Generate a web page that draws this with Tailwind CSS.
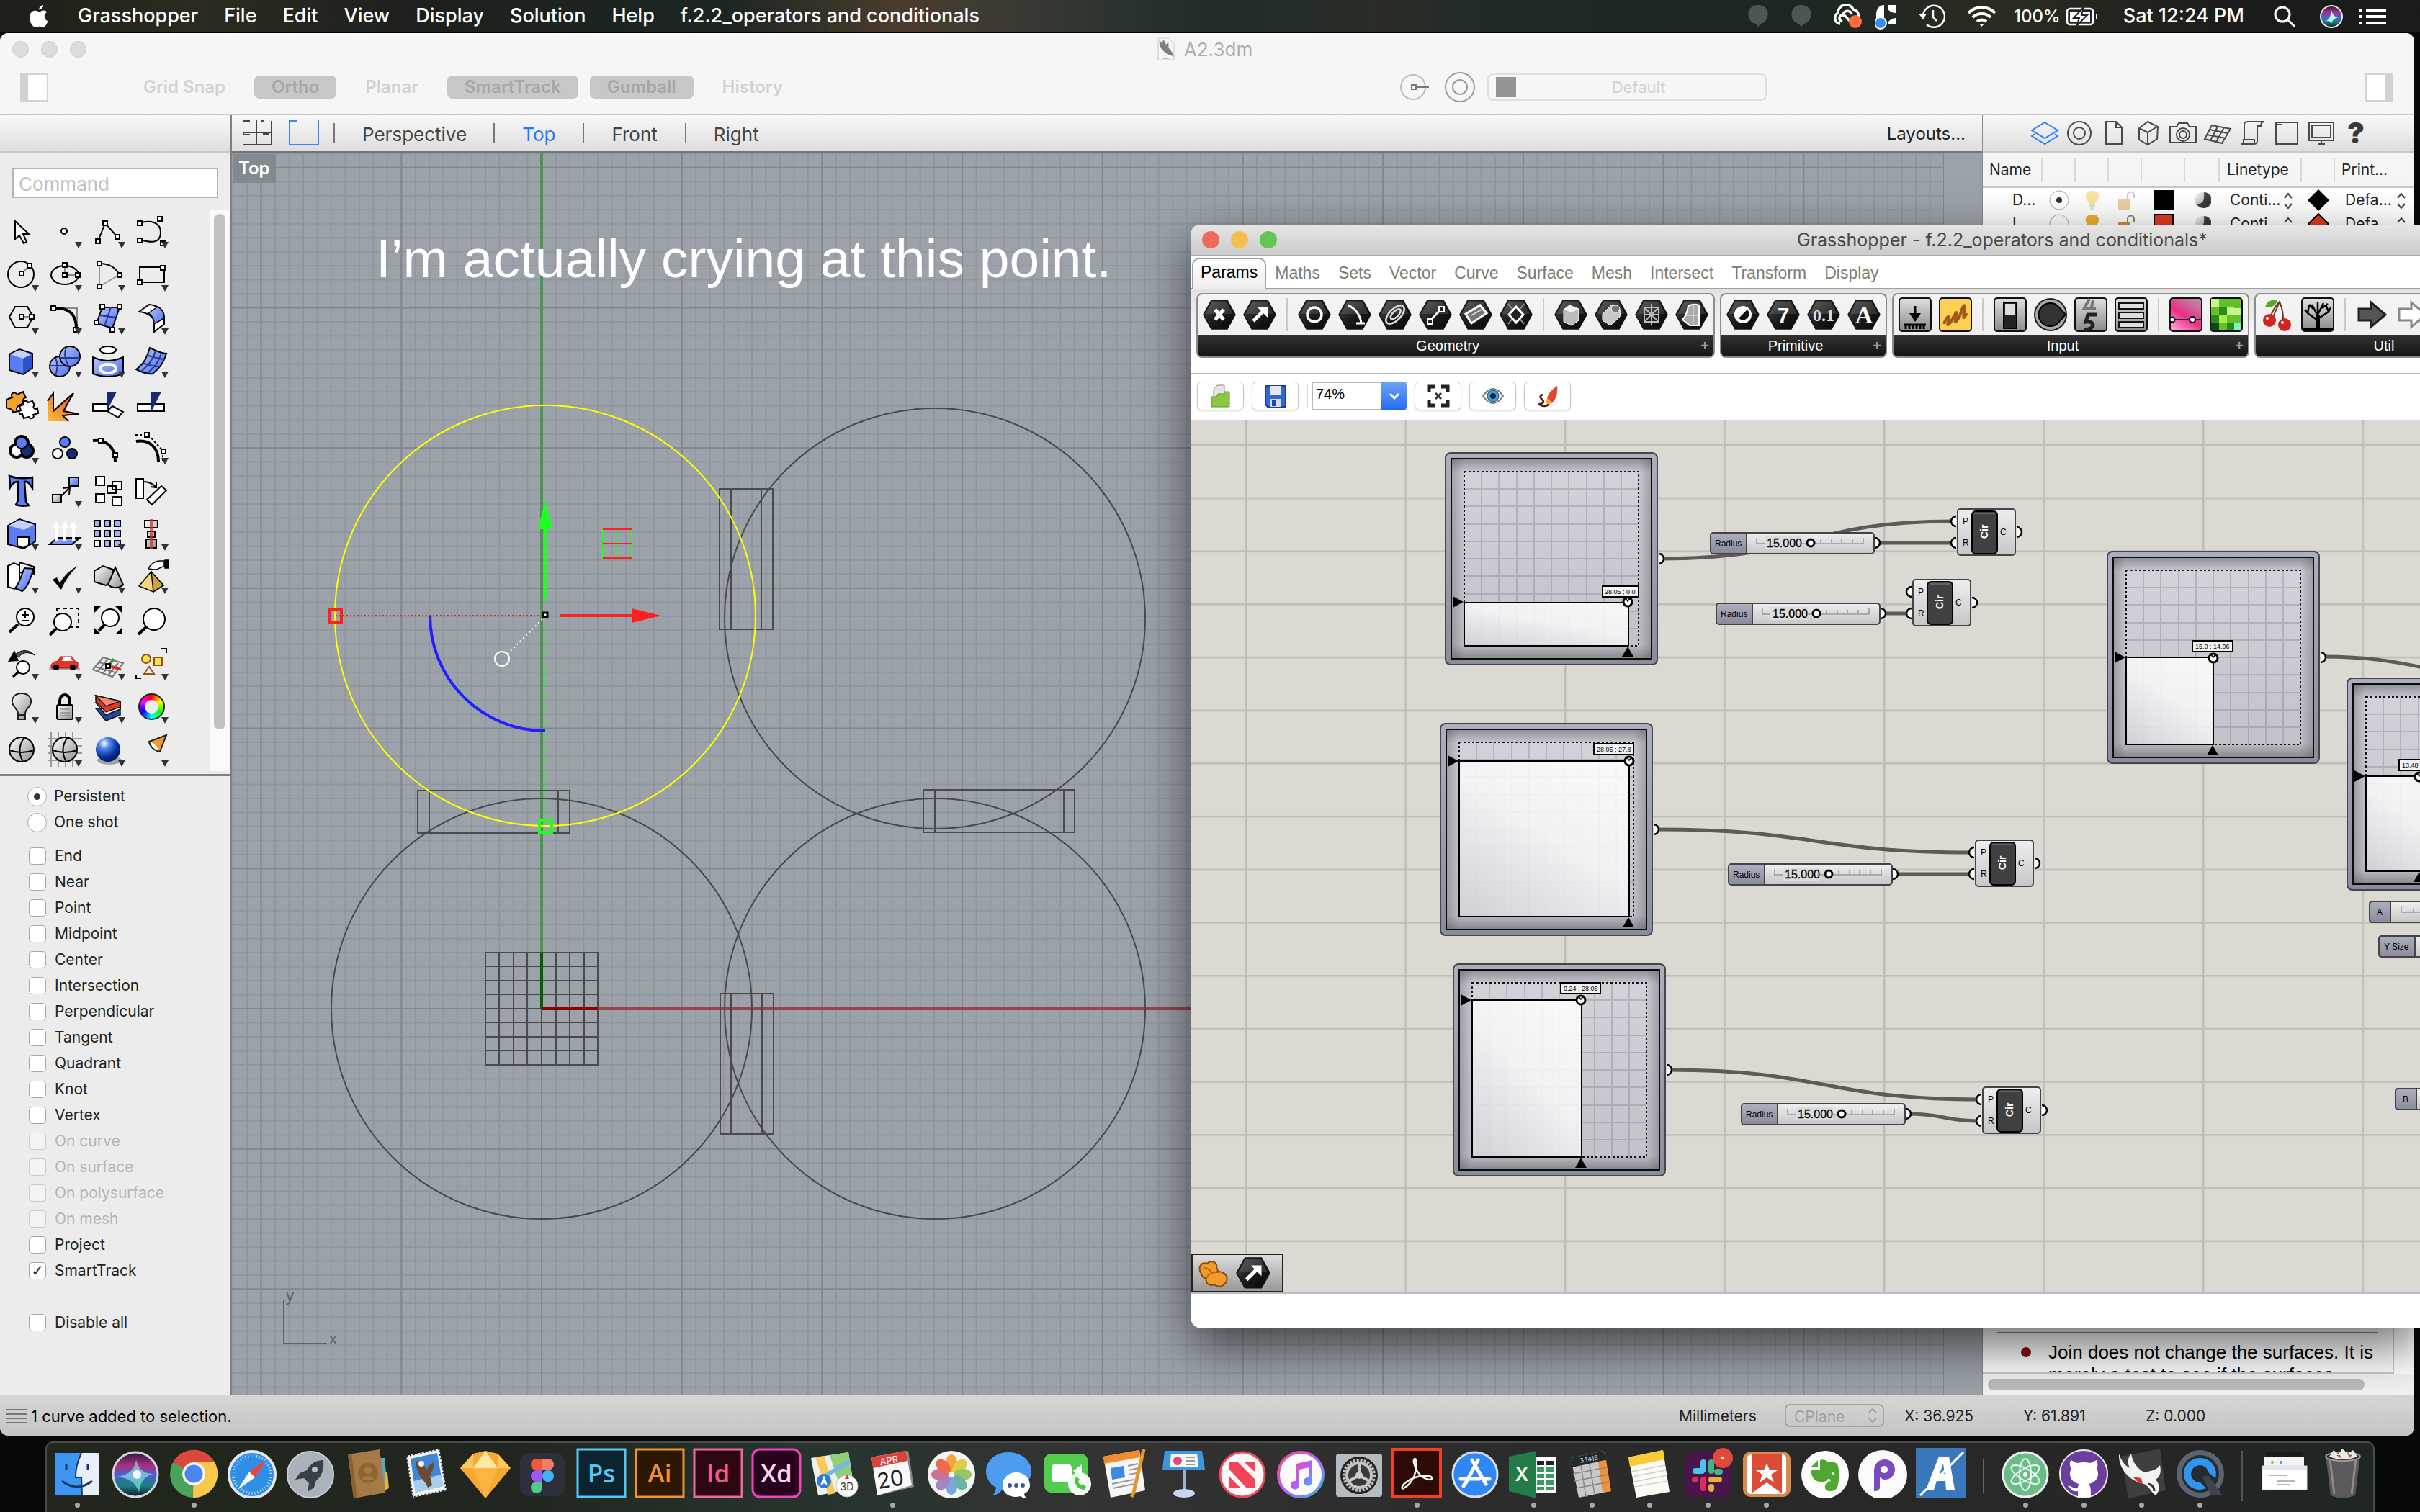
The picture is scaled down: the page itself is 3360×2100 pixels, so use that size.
<!DOCTYPE html>
<html lang="en">
<head>
<meta charset="utf-8">
<meta name="viewport" content="width=device-width, initial-scale=1">
<title>Grasshopper - f.2.2_operators and conditionals</title>
<script src="https://cdn.jsdelivr.net/npm/@tailwindcss/browser@4"></script>
</head>
<body class="relative flex h-screen flex-col overflow-hidden bg-[#080a09] font-['Inter',sans-serif] text-[22px] text-[#222]">

<!-- Shared gradients and glyph parts -->
<svg class="absolute size-0" aria-hidden="true">
  <defs>
    <linearGradient id="blue" x1="0" y1="0" x2="1" y2="1"><stop offset="0" stop-color="#b9c8fb"/><stop offset="1" stop-color="#4a6cf0"/></linearGradient>
    <linearGradient id="grey" x1="0" y1="0" x2="1" y2="1"><stop offset="0" stop-color="#fff"/><stop offset="1" stop-color="#8d8d8d"/></linearGradient>
    <linearGradient id="fire" x1="0" y1="1" x2="1" y2="0"><stop offset="0" stop-color="#f9c33a"/><stop offset="1" stop-color="#e4432a"/></linearGradient>
    <linearGradient id="hexfill" x1="0" y1="0" x2="1" y2="1"><stop offset="0" stop-color="#4a4a4a"/><stop offset=".5" stop-color="#1c1c1c"/><stop offset="1" stop-color="#050505"/></linearGradient>
    <linearGradient id="tile" x1="0" y1="0" x2="0" y2="1"><stop offset="0" stop-color="#e0e0e0"/><stop offset="1" stop-color="#8a8a8a"/></linearGradient>
    <radialGradient id="orb" cx=".35" cy=".25" r=".9"><stop offset="0" stop-color="#fff"/><stop offset=".25" stop-color="#4a86e8"/><stop offset=".6" stop-color="#0c2f9c"/><stop offset="1" stop-color="#020b3a"/></radialGradient>
    <linearGradient id="siri" x1="0" y1="0" x2="0" y2="1"><stop offset="0" stop-color="#2a1640"/><stop offset=".3" stop-color="#a8327e"/><stop offset=".5" stop-color="#4b5fd0"/><stop offset=".75" stop-color="#1f7f80"/><stop offset="1" stop-color="#101430"/></linearGradient>
    <g id="n"><rect x="-3" y="-3" width="6" height="6" fill="#fff" stroke="#000" stroke-width="2"/></g>
    <g id="more"><path d="M44 45h10l-5 9z" fill="#333"/></g>
    <g id="lens"><path d="M12 50 24 39" stroke="#000" stroke-width="4"/><circle cx="34" cy="29" r="15" fill="#fff" stroke="#000" stroke-width="2"/></g>
    <g id="hex"><path d="M12 1h22l11 20-11 20H12L1 21z" fill="url(#hexfill)" stroke="#111" stroke-width="1.500"/><path d="M13 3h20l9 17H4z" fill="#fff" opacity=".12"/></g>
    <g id="tilebox"><rect x="1" y="1" width="44" height="46" rx="4" fill="url(#tile)" stroke="#111" stroke-width="2"/></g>
  </defs>
</svg>

<!-- System menu bar -->
<header class="flex h-[45px] shrink-0 items-center bg-[linear-gradient(90deg,#1c1e18_0%,#2b2b20_8%,#1d201d_17%,#1b2622_30%,#4b3b2c_37%,#3a3a33_42%,#1e2d2a_50%,#2a2c27_57%,#1c2a26_63%,#1d2622_74%,#2a2c20_83%,#1c1d1b_92%,#1a1c1a_100%)] pl-[40px] pr-[46px] text-[27px] font-medium text-white">
  <svg class="h-[34px] w-[30px]" viewBox="0 0 30 34" fill="#fff"><path d="M20 1c.4 3-2.600 6.500-5.700 6.400C14 4.300 17 1.200 20 1zM25 11c-5 3-4 10 1.500 12.500-1.500 4-4 8.500-7 8.500-2 0-2.600-1.300-5-1.300S11.400 32 9.500 32C5.500 32 1 24.500 1 18.200 1 12 5 8.700 8.900 8.700c2.500 0 4.100 1.500 6 1.500 1.800 0 3.300-1.600 6.200-1.600 1.500 0 3 .8 3.900 2.400z"/></svg>
  <nav class="ml-[38px] flex gap-[36px]">
    <button>Grasshopper</button><button>File</button><button>Edit</button><button>View</button><button>Display</button><button>Solution</button><button>Help</button><button>f.2.2_operators and conditionals</button>
  </nav>
  <div class="ml-auto flex items-center">
    <svg class="h-[36px] w-[28px]" viewBox="0 0 28 36"><path d="M14 2a12 13 0 0 0-3 26l3 5 3-5a12 13 0 0 0-3-26z" fill="#4c5653"/></svg>
    <svg class="ml-[32px] h-[36px] w-[28px]" viewBox="0 0 28 36"><path d="M14 2a12 13 0 0 0-3 26l3 5 3-5a12 13 0 0 0-3-26z" fill="#4c5653"/></svg>
    <svg class="ml-[28px] h-[34px] w-[43px]" viewBox="0 0 43 34"><path d="M12 27a8 8 0 0 1-3-15 11 11 0 0 1 21-5 9 9 0 0 1 4 16M15 24c-6-2-5-9 1-9 5 0 7 9 12 9M16 15c1-7 10-8 12-1" fill="none" stroke="#fff" stroke-width="3.500"/><circle cx="33" cy="24" r="9" fill="#ff6b3d"/></svg>
    <svg class="ml-[17px] h-[36px] w-[30px]" viewBox="0 0 30 36"><path d="M13 2v26H2V15C2 8 6 2 13 2zM18 2h11v11q-6 0-11-5zM18 26q5-6 11-6v9H18z" fill="#fff"/><circle cx="8" cy="27" r="8" fill="#3d8bf5" stroke="#fff" stroke-width="2"/></svg>
    <svg class="ml-[30px] size-[38px]" viewBox="0 0 38 38" fill="none" stroke="#fff" stroke-width="2.500"><path d="M7 20a15 15 0 1 1 5 10M21 10v10l5 5"/><path d="M1 15h11l-5 8z" fill="#fff" stroke="none"/></svg>
    <svg class="ml-[29px] h-[32px] w-[43px]" viewBox="0 0 43 32" fill="none" stroke="#fff" stroke-width="4"><path d="M3 11a26 26 0 0 1 37 0M9 17a18 18 0 0 1 25 0M15 23a10 10 0 0 1 13 0"/><path d="M18 26h7l-3.500 4z" fill="#fff" stroke="none"/></svg>
    <span class="ml-[23px] text-[24px]">100%</span>
    <svg class="ml-[7px] h-[26px] w-[46px]" viewBox="0 0 46 26"><rect x="2" y="2" width="36" height="22" rx="4" fill="none" stroke="#fff" stroke-width="2.500"/><path d="M42 9q4 4 0 8z" fill="#fff"/><rect x="6" y="6" width="28" height="14" fill="#fff"/><path d="M25 0 11 15h8l-4 11 15-15h-8z" fill="#fff" stroke="#1d2622" stroke-width="2"/></svg>
    <span class="ml-[34px]">Sat 12:24 PM</span>
    <svg class="ml-[40px] size-[32px]" viewBox="0 0 32 32" fill="none" stroke="#fff" stroke-width="3"><circle cx="13" cy="13" r="10"/><path d="m20 20 10 10"/></svg>
    <svg class="ml-[32px] size-[34px]" viewBox="0 0 34 34"><circle cx="17" cy="17" r="15" fill="url(#siri)" stroke="#e9e9f2" stroke-width="2"/><path d="M7 24q9-2 10-16 2 10 10 10-9 2-10 9-2-6-10-3z" fill="#bff4ff"/></svg>
    <svg class="ml-[22px] h-[22px] w-[38px]" viewBox="0 0 38 22" fill="#fff"><path d="M0 0h4v4H0zM9 0h28v4H9zM0 9h4v4H0zM9 9h28v4H9zM0 18h4v4H0zM9 18h28v4H9z"/></svg>
  </div>
</header>

<!-- Rhino document window -->
<main class="mr-2 flex min-h-0 flex-1 flex-col overflow-hidden rounded-[12px] border-t border-[#000] bg-[#ececec]">
  <div class="h-[114px] shrink-0 border-b-2 border-[#c9c9c9] bg-[#f6f6f6]">
    <div class="flex h-[44px] items-center">
      <div class="flex gap-[17px] pl-[17px] [&>i]:size-[23px] [&>i]:rounded-full [&>i]:border [&>i]:border-[#cbcbcb] [&>i]:bg-[#dcdcdc]"><i></i><i></i><i></i></div>
      <h1 class="mx-auto flex items-center gap-[13px] pr-[126px] text-[26px] text-[#adadad]"><svg class="h-[32px] w-[24px]" viewBox="0 0 24 32"><path d="M1 1h15l7 7v23H1z" fill="#f5f5f5" stroke="#ccc"/><path d="M3 3c1 3 2 4 4 5l1-5c3 3 3 5 4 7l3-4c1 5 0 7 1 9 3 3 5 6 7 12-4-3-7-2-11-5C7 18 1 12 3 3z" fill="#808080"/><path d="M8 29h8" stroke="#bbb" stroke-width="2"/></svg>A2.3dm</h1>
    </div>
    <div class="flex h-[62px] items-center pl-[28px] pr-[29px] text-[24px] font-semibold text-[#d2d2d2]">
      <svg class="h-[39px] w-[39px]" viewBox="0 0 39 39"><path d="M1 1h37v37H1z" fill="#fff" stroke="#d2d2d2" stroke-width="2"/><path d="M0 0h11v39H0z" fill="#d2d2d2"/></svg>
      <div class="ml-[108px] flex items-center gap-[16px] [&>button]:h-[32px] [&>button]:rounded-[7px] [&>button]:px-[24px] [&>button]:leading-[32px]">
        <button disabled>Grid Snap</button><button disabled class="bg-[#c7c7c7] text-[#a7a7a7]">Ortho</button><button disabled>Planar</button><button disabled class="bg-[#c7c7c7] text-[#a7a7a7]">SmartTrack</button><button disabled class="bg-[#c7c7c7] text-[#a7a7a7]">Gumball</button><button disabled>History</button>
      </div>
      <div class="ml-auto flex items-center">
        <svg class="size-[40px]" viewBox="0 0 40 40" fill="none" stroke="#bdbdbd" stroke-width="2"><circle cx="18" cy="20" r="17"/><path d="M16 17h6v6h-6zM22 20h18" stroke="#777"/></svg>
        <svg class="ml-[21px] size-[44px]" viewBox="0 0 44 44" fill="none" stroke="#999" stroke-width="2"><circle cx="22" cy="22" r="20"/><circle cx="22" cy="22" r="10"/></svg>
        <button disabled class="ml-[16px] flex h-[38px] w-[388px] items-center rounded-[8px] border-2 border-[#dedede] pl-[10px] text-[22px] font-normal text-[#d2d2d2]"><i class="size-[28px] bg-[#949494]"></i><span class="mx-auto pr-[6px]">Default</span></button>
        <svg class="ml-[831px] h-[39px] w-[39px]" viewBox="0 0 39 39"><path d="M1 1h37v37H1z" fill="#fff" stroke="#d2d2d2" stroke-width="2"/><path d="M28 0h11v39H28z" fill="#d2d2d2"/></svg>
      </div>
    </div>
  </div>

  <div class="flex min-h-0 flex-1">
    <!-- Command line, tools and object snaps -->
    <aside class="flex w-[322px] shrink-0 flex-col border-r-2 border-[#808080]">
      <div class="h-[52px] border-b-2 border-[#c9c9c9] bg-linear-to-b from-[#f8f8f8] to-[#dedede]"></div>
      <input aria-label="Command" placeholder="Command" class="mx-[17px] mt-[21px] h-[42px] border-2 border-[#b5b5b5] bg-white px-[7px] pt-[2px] text-[26px] placeholder:text-[#bfbfbf]">
      <div class="mt-[16px] flex border-b-[3px] border-[#808080] pb-[4px]">
        <div class="grid w-[240px] grid-cols-4 [&_svg]:size-[60px] [&_svg]:overflow-visible">
          <button aria-label="Select"><svg viewBox="0 0 60 60"><path d="M21 16v25l6-5 6 11 4-2-5-11h8z" fill="#fff" stroke="#000" stroke-width="2"/></svg></button>
          <button aria-label="Point"><svg viewBox="0 0 60 60"><circle cx="29" cy="30" r="4" fill="#fff" stroke="#000" stroke-width="2"/><use href="#more"/></svg></button>
          <button aria-label="Polyline"><svg viewBox="0 0 60 60"><path d="M16 44 26 19 43 38" fill="none" stroke="#000" stroke-width="2"/><use href="#n" x="16" y="44"/><use href="#n" x="26" y="19"/><use href="#n" x="43" y="38"/><use href="#more"/></svg></button>
          <button aria-label="Curve"><svg viewBox="0 0 60 60"><path d="M14 19c14-5 29-2 29 13 0 16-14 14-29 10" fill="none" stroke="#000" stroke-width="2"/><use href="#n" x="14" y="19"/><use href="#n" x="14" y="43"/><use href="#n" x="42" y="13"/><use href="#n" x="46" y="47"/><use href="#more"/></svg></button>

          <button aria-label="Circle"><svg viewBox="0 0 60 60"><circle cx="29" cy="30" r="18" fill="none" stroke="#000" stroke-width="2"/><path d="m30 29 11-11" stroke="#888" stroke-width="2"/><use href="#n" x="30" y="29"/><use href="#n" x="41" y="18"/><use href="#more"/></svg></button>
          <button aria-label="Ellipse"><svg viewBox="0 0 60 60"><ellipse cx="30" cy="31" rx="19" ry="13" fill="none" stroke="#000" stroke-width="2"/><path d="M30 17v14h18" fill="none" stroke="#888" stroke-width="2"/><use href="#n" x="30" y="17"/><use href="#n" x="30" y="31"/><use href="#n" x="48" y="31"/><use href="#more"/></svg></button>
          <button aria-label="Arc"><svg viewBox="0 0 60 60"><path d="M18 47V16M18 47 45 31" stroke="#999" stroke-width="2"/><path d="M18 15c13 0 23 6 28 16" fill="none" stroke="#000" stroke-width="2"/><use href="#n" x="18" y="15"/><use href="#n" x="46" y="31"/><use href="#n" x="18" y="47"/><use href="#more"/></svg></button>
          <button aria-label="Rectangle"><svg viewBox="0 0 60 60"><path d="M14 20h34v21H14z" fill="none" stroke="#000" stroke-width="2"/><use href="#n" x="14" y="41"/><use href="#n" x="46" y="21"/><use href="#more"/></svg></button>

          <button aria-label="Polygon"><svg viewBox="0 0 60 60"><path d="m13 29 8-14h17l8 14-8 15H21z" fill="none" stroke="#000" stroke-width="2"/><path d="M30 29h14" stroke="#888" stroke-width="2"/><use href="#n" x="30" y="29"/><use href="#n" x="44" y="29"/><use href="#more"/></svg></button>
          <button aria-label="Fillet curves"><svg viewBox="0 0 60 60"><path d="M14 17h33v30" fill="none" stroke="#888" stroke-width="2"/><path d="M14 17c20-1 32 6 32 29" fill="none" stroke="#000" stroke-width="4"/><use href="#n" x="14" y="17"/><use href="#n" x="45" y="47"/><use href="#more"/></svg></button>
          <button aria-label="Surface from points"><svg viewBox="0 0 60 60"><path d="m22 16 24 0-10 29-22-7z" fill="url(#blue)" stroke="#000" stroke-width="2"/><path d="m34 16-9 26M18 27l24 3" stroke="#223a8a" stroke-width="2"/><use href="#n" x="22" y="15"/><use href="#n" x="46" y="15"/><use href="#n" x="14" y="37"/><use href="#n" x="36" y="47"/><use href="#more"/></svg></button>
          <button aria-label="Fillet surfaces"><svg viewBox="0 0 60 60"><path d="m13 22 14-10c12 1 21 8 21 18v9L34 50V37c0-8-9-14-21-15z" fill="#fff" stroke="#000" stroke-width="2"/><path d="m26 24 13-9c6 3 9 9 9 16l-14 8c0-8-3-12-8-15z" fill="url(#blue)" stroke="#000" stroke-width="1.500"/><use href="#more"/></svg></button>

          <button aria-label="Box"><svg viewBox="0 0 60 60"><path d="M13 21 27 14l18 6v20L32 49l-19-6z" fill="#5c7cf4" stroke="#000" stroke-width="2"/><path d="m14 21 13-6 17 6-12 6z" fill="#c3d0fd"/><path d="m32 27 12-6v19l-12 8z" fill="#3250c8"/><use href="#more"/></svg></button>
          <button aria-label="Spheres"><svg viewBox="0 0 60 60"><circle cx="23" cy="38" r="14" fill="url(#blue)" stroke="#000" stroke-width="2"/><path d="M9 37h28M17 26q5 12 0 24" fill="none" stroke="#223a8a" stroke-width="2"/><circle cx="37" cy="24" r="14" fill="url(#blue)" stroke="#000" stroke-width="2"/><path d="M23 26h28M32 11q-5 12 3 26" fill="none" stroke="#223a8a" stroke-width="2"/><use href="#more"/></svg></button>
          <button aria-label="Project curve"><svg viewBox="0 0 60 60"><ellipse cx="30" cy="15" rx="11" ry="5" fill="#fff" stroke="#000" stroke-width="2"/><path d="M9 25q21 10 42 0v23q-21 8-42 0z" fill="url(#blue)" stroke="#000" stroke-width="2"/><ellipse cx="30" cy="41" rx="11" ry="6" fill="none" stroke="#fff" stroke-width="4"/><use href="#more"/></svg></button>
          <button aria-label="Surface"><svg viewBox="0 0 60 60"><path d="M28 12c8 4 15 8 23 8-4 14-11 22-19 28-7 1-15-2-23-6 12-8 15-18 19-30z" fill="url(#blue)" stroke="#000" stroke-width="2"/><path d="M36 16c-3 12-10 20-20 29M44 19c-4 14-10 20-20 29M24 22c8 3 14 5 24 6M18 33c8 3 14 5 24 5" fill="none" stroke="#223a8a" stroke-width="2"/><use href="#more"/></svg></button>

          <button aria-label="Join"><svg viewBox="0 0 60 60"><path d="m27 33 6-2c-3-5 4-7 6-3l6-2 3 6c-4 2 0 7 4 4l1 7-7 2c3 5-4 7-6 3l-7 2-2-6c-5 2-6-5-2-5z" fill="#fff" stroke="#000" stroke-width="2"/><path d="m9 24 8-3c-4-6 4-9 7-4l8-4 4 8c-8 2 0 8-8 10-3 1-8 7-3 9l-7 2c0-8-11-3-9-10z" fill="#f5a22f" stroke="#000" stroke-width="2"/></svg></button>
          <button aria-label="Explode"><svg viewBox="0 0 60 60"><path d="M6 25 14 15v23l28-24-12 25 19 5-22 3 8 7H6z" fill="url(#fire)"/><path d="M6 26 14 15v25l28-25-14 25 21 4-22 2 8 8" fill="none" stroke="#000" stroke-width="2"/></svg></button>
          <button aria-label="Trim"><svg viewBox="0 0 60 60"><path d="M9 30h22v10H9zM36 33l15 8-7 8-15-9z" fill="#fff" stroke="#000" stroke-width="2"/><path d="M28 13h14L28 41z" fill="#182a72"/></svg></button>
          <button aria-label="Split"><svg viewBox="0 0 60 60"><path d="M11 30h37v10H11z" fill="#fff" stroke="#000" stroke-width="2"/><path d="M30 13h14L30 41z" fill="#182a72"/></svg></button>

          <button aria-label="Group"><svg viewBox="0 0 60 60" stroke="#000"><g stroke-width="6"><circle cx="30" cy="24" r="8"/><circle cx="23" cy="35" r="8"/><circle cx="37" cy="35" r="8"/></g><g stroke-width="2"><circle cx="23" cy="35" r="8" fill="#fff"/><circle cx="37" cy="35" r="8" fill="#182a72"/><circle cx="30" cy="24" r="8" fill="#5c7cf4"/></g><use href="#more" stroke="none"/></svg></button>
          <button aria-label="Ungroup"><svg viewBox="0 0 60 60" stroke="#000" stroke-width="2"><circle cx="30" cy="23" r="7" fill="#5c7cf4"/><circle cx="20" cy="39" r="7" fill="#fff"/><circle cx="40" cy="39" r="7" fill="#182a72"/></svg></button>
          <button aria-label="Edit points"><svg viewBox="0 0 60 60"><path d="M9 21c18-2 31 8 31 29" fill="none" stroke="#000" stroke-width="4"/><use href="#n" x="20" y="21"/><use href="#n" x="40" y="41"/></svg></button>
          <button aria-label="Control points"><svg viewBox="0 0 60 60"><path d="M9 22c18-3 31 8 31 28" fill="none" stroke="#000" stroke-width="4"/><path d="M8 13h18l20 22v14" fill="none" stroke="#000" stroke-width="2" stroke-dasharray="3 3"/><use href="#n" x="24" y="13"/><use href="#n" x="47" y="36"/><use href="#more"/></svg></button>

          <button aria-label="Text"><svg viewBox="0 0 60 60"><path d="M13 10c10 4 20 4 32 2v15l-5-7c-3-3-5-2-6-2l2 28 4 5c-6 1-12 1-18-1l3-6V18c-5 0-8 2-11 8z" fill="#5c7cf4" stroke="#000" stroke-width="2.500"/></svg></button>
          <button aria-label="Move"><svg viewBox="0 0 60 60" stroke="#000" stroke-width="2"><path d="m26 37 10-10" /><path d="m27 27 10-1-1 10" fill="none"/><path d="M13 36h12v11H13z" fill="url(#grey)"/><path d="M36 12h13v12H36z" fill="url(#blue)"/><use href="#more" stroke="none"/></svg></button>
          <button aria-label="Copy"><svg viewBox="0 0 60 60" fill="#fff" stroke="#000" stroke-width="2"><path d="M13 11h12v12H13zM13 35h12v12H13zM36 18h13v11H36zM36 39h13v12H36z"/><path d="M29 24h12v10H29z" fill="none"/></svg></button>
          <button aria-label="Rotate"><svg viewBox="0 0 60 60" fill="#fff" stroke="#000" stroke-width="2"><path d="M9 14h10v27H9zM24 43l20-19 7 6-20 20z"/><path d="M19 18q11 0 18 8M29 25l8 1 0-8" fill="none"/></svg></button>

          <button aria-label="Boolean"><svg viewBox="0 0 60 60" stroke="#000" stroke-width="2"><path d="m11 19 16-9 22 7v24l-16 10-22-6z" fill="#5c7cf4"/><path d="m12 19 15-8 20 7-14 7z" fill="#c3d0fd" stroke="none"/><path d="M24 35h16v11l-8 4-8-3z" fill="#fff"/><use href="#more" stroke="none"/></svg></button>
          <button aria-label="Extrude"><svg viewBox="0 0 60 60"><path d="m20 36-11 9h31l11-9z" fill="url(#blue)" stroke="#000" stroke-width="2"/><path d="m18 12-5 10h3v19h4V22h3zM30 12l-5 10h3v19h4V22h3zM42 12l-5 10h3v19h4V22h3z" fill="#fff"/><use href="#more"/></svg></button>
          <button aria-label="Array"><svg viewBox="0 0 60 60" fill="#9fb2fb" stroke="#000" stroke-width="2"><path d="M11 12h8v8h-8zM25 12h8v8h-8zM39 12h8v8h-8zM11 26h8v8h-8zM25 26h8v8h-8zM39 26h8v8h-8zM25 40h8v8h-8zM39 40h8v8h-8z"/><path d="M11 40h8v8h-8z" fill="#fff"/><use href="#more" stroke="none"/></svg></button>
          <button aria-label="Align"><svg viewBox="0 0 60 60" fill="url(#grey)" stroke="#000" stroke-width="2"><path d="M21 12h18v10H21zM25 27h10v8H25zM23 38h14v12H23z"/><path d="M30 10v42" stroke="#c33" stroke-width="4" opacity=".75"/><use href="#more" stroke="none"/></svg></button>

          <button aria-label="Flow"><svg viewBox="0 0 60 60" stroke="#000" stroke-width="2"><path d="m11 15 8-4 8 3v28l-7 5-9-3z" fill="#fff"/><path d="m27 10 20 6v10l-20-2z" fill="#eee"/><path d="M34 18c-4 8-6 20-13 28l10 4c10-8 11-20 16-31z" fill="url(#blue)"/><use href="#more" stroke="none"/></svg></button>
          <button aria-label="Check"><svg viewBox="0 0 60 60"><path d="m13 34 6-3 4 8c6-11 15-19 25-24C38 24 30 36 25 48z" fill="#000"/><use href="#more"/></svg></button>
          <button aria-label="Solids"><svg viewBox="0 0 60 60" stroke="#000" stroke-width="2"><path d="m11 22 12-7 14 5v17l-10 5-16-5z" fill="url(#grey)"/><path d="m40 17 11 24c-6 6-16 5-21 0z" fill="url(#grey)"/><use href="#more" stroke="none"/></svg></button>
          <button aria-label="Pull"><svg viewBox="0 0 60 60" stroke="#000" stroke-width="1.500"><path d="m30 23 17 19-14 9-20-8z" fill="#f5d67a"/><path d="m30 23 3 28 14-9z" fill="#cfa13c"/><path d="M26 19c3-6 8-11 16-11h6v8c-6 0-8 5-14 4z" fill="#fff"/><path d="M49 7h5v11h-5z"/><use href="#more" stroke="none"/></svg></button>

          <button aria-label="Zoom dynamic"><svg viewBox="0 0 60 60"><path d="M13 47 25 36" stroke="#000" stroke-width="4"/><circle cx="35" cy="26" r="12" fill="#fff" stroke="#000" stroke-width="2"/><path d="M30 23h10M35 18v10M30 31h10" stroke="#000" stroke-width="2"/></svg></button>
          <button aria-label="Zoom window"><svg viewBox="0 0 60 60"><path d="M19 14h30v26H19z" fill="none" stroke="#000" stroke-width="2" stroke-dasharray="5 4"/><path d="M9 51 18 42" stroke="#000" stroke-width="4"/><circle cx="27" cy="33" r="12" fill="#fff" stroke="#000" stroke-width="2"/></svg></button>
          <button aria-label="Zoom extents"><svg viewBox="0 0 60 60"><path d="M10 11h10L10 21zM50 11H40l10 10zM10 50h10L10 40zM50 50H40l10-10z"/><path d="M17 45 26 36" stroke="#000" stroke-width="4"/><circle cx="33" cy="27" r="12" fill="#fff" stroke="#000" stroke-width="2"/></svg></button>
          <button aria-label="Zoom selected"><svg viewBox="0 0 60 60"><use href="#lens"/></svg></button>

          <button aria-label="Undo view"><svg viewBox="0 0 60 60"><path d="M20 19c8-8 20-9 28 0-8-5-17-5-22 3z" fill="#555" stroke="#000"/><path d="m11 28 9-16 6 15z"/><path d="m18 49 8-7" stroke="#000" stroke-width="3"/><circle cx="32" cy="36" r="9" fill="#fff" stroke="#000" stroke-width="2"/><use href="#more"/></svg></button>
          <button aria-label="Named views"><svg viewBox="0 0 60 60"><path d="M8 38h43" stroke="#aaa" stroke-width="2"/><path d="M11 33c2-5 6-5 9-6l4-6h16l4 6 4 2v8H11z" fill="#e2362b" stroke="#a11" /><path d="M28 22h10l3 5H26z" fill="#fff"/><circle cx="18" cy="36" r="4"/><circle cx="41" cy="36" r="4"/><use href="#more"/></svg></button>
          <button aria-label="Construction plane"><svg viewBox="0 0 60 60" fill="none" stroke="#777" stroke-width="2"><path d="m9 39 14-17 28 8-15 19zM16 41l14-17M23 44l14-17M30 47l14-17M12 35l28 8M18 29l28 8"/><path d="m30 34 8-10" stroke="#2a2" stroke-width="3"/><path d="m31 34 17 5" stroke="#d22" stroke-width="3"/><use href="#n" x="30" y="34"/><use href="#more" stroke="none"/></svg></button>
          <button aria-label="Layout shapes"><svg viewBox="0 0 60 60" fill="#fce14b" stroke="#96520f" stroke-width="2"><circle cx="23" cy="24" r="6"/><path d="M34 22h11v11H34z"/><path d="m27 35 7 10H20z" fill="none"/><path d="M44 10h7v6M9 46v5h7" fill="none" stroke="#000"/><use href="#more" stroke="none"/></svg></button>

          <button aria-label="Light"><svg viewBox="0 0 60 60"><path d="M30 12c-9 0-14 6-13 13 1 6 7 8 8 14v9h10v-9c1-6 7-8 8-14 1-7-4-13-13-13z" fill="url(#grey)" stroke="#222" stroke-width="2"/><path d="M25 42h10" stroke="#222" stroke-width="2"/><use href="#more"/></svg></button>
          <button aria-label="Lock"><svg viewBox="0 0 60 60"><path d="M23 29v-7a7 8 0 0 1 14 0v7" fill="none" stroke="#000" stroke-width="4"/><rect x="19" y="28" width="22" height="20" rx="2" fill="url(#grey)" stroke="#000" stroke-width="2"/><path d="M23 34h14M23 39h14M23 43h14" stroke="#777"/><use href="#more"/></svg></button>
          <button aria-label="Layers"><svg viewBox="0 0 60 60" stroke="#111" stroke-width="1.500"><path d="m13 33 14 17 20-8V30z" fill="#27459f"/><path d="m13 25 14 17 20-8V24z" fill="#fff"/><path d="m13 15 34 8v8l-20 7-14-15z" fill="#e0372a"/><path d="m13 15 34 8-20 7z" fill="#f58a6a"/><use href="#more" stroke="none"/></svg></button>
          <button aria-label="Color"><span class="relative block size-[60px]"><i class="absolute left-[12px] top-[12px] size-[37px] rounded-full border-2 border-[#222] bg-[conic-gradient(#f00,#ff0,#0f0,#0ff,#00f,#f0f,#f00)]"></i><i class="absolute left-[21px] top-[21px] size-[19px] rounded-full bg-[#ececec]"></i><svg class="absolute inset-0" viewBox="0 0 60 60"><use href="#more"/></svg></span></button>

          <button aria-label="Shade"><svg viewBox="0 0 60 60"><circle cx="30" cy="30" r="17" fill="url(#grey)" stroke="#000" stroke-width="2"/><path d="M13 31q17 6 34 0M34 13q-12 16-2 34" fill="none" stroke="#000" stroke-width="2"/></svg></button>
          <button aria-label="Ghosted"><svg viewBox="0 0 60 60"><path d="M6 15h48M6 25h48M6 35h48M6 45h48M11 6v48M21 6v48M31 6v48M41 6v48" stroke="#999" stroke-width="2"/><circle cx="30" cy="30" r="17" fill="url(#grey)" stroke="#000" stroke-width="2"/><path d="M13 31q17 6 34 0M34 13q-12 16-2 34" fill="none" stroke="#000" stroke-width="2"/><use href="#more"/></svg></button>
          <button aria-label="Render"><svg viewBox="0 0 60 60"><ellipse cx="32" cy="45" rx="17" ry="6" fill="#000" opacity=".3"/><circle cx="30" cy="30" r="17" fill="url(#orb)"/><use href="#more"/></svg></button>
          <button aria-label="Spotlight"><svg viewBox="0 0 60 60"><path d="m27 19 24-9-9 23c-7-1-14-7-15-14z" fill="#f39a2b" stroke="#222" stroke-width="2"/><path d="M29 20c4 0 10 6 11 11-5 0-10-5-11-11z" fill="#fff"/><use href="#more"/></svg></button>
        </div>
        <div class="ml-auto mr-[2px] w-[26px] bg-[#fafafa] px-[5px] pt-[6px]"><div class="h-[716px] rounded-full bg-[#c1c1c1]"></div></div>
      </div>
      <form class="pl-[38px] pt-[10px] text-[21px] [&>label]:flex [&>label]:h-[36px] [&>label]:items-center [&>label]:gap-[10px] [&_input]:appearance-none [&_input]:border [&_input]:border-[#a8a8a8] [&_input]:bg-white [&_input[type=radio]]:size-[27px] [&_input[type=radio]]:rounded-full [&_input[type=checkbox]]:mx-[2px] [&_input[type=checkbox]]:size-[24px] [&_input[type=checkbox]]:rounded-[5px] [&_input:disabled]:border-[#cacaca] [&_input:disabled]:bg-[#f4f4f4]">
        <label><input type="radio" name="mode" checked class="checked:bg-[radial-gradient(circle,#333_4px,#fff_5px)]">Persistent</label>
        <label><input type="radio" name="mode">One shot</label>
        <label class="mt-[11px]"><input type="checkbox">End</label>
        <label><input type="checkbox">Near</label>
        <label><input type="checkbox">Point</label>
        <label><input type="checkbox">Midpoint</label>
        <label><input type="checkbox">Center</label>
        <label><input type="checkbox">Intersection</label>
        <label><input type="checkbox">Perpendicular</label>
        <label><input type="checkbox">Tangent</label>
        <label><input type="checkbox">Quadrant</label>
        <label><input type="checkbox">Knot</label>
        <label><input type="checkbox">Vertex</label>
        <label class="text-[#b5b5b5]"><input type="checkbox" disabled>On curve</label>
        <label class="text-[#b5b5b5]"><input type="checkbox" disabled>On surface</label>
        <label class="text-[#b5b5b5]"><input type="checkbox" disabled>On polysurface</label>
        <label class="text-[#b5b5b5]"><input type="checkbox" disabled>On mesh</label>
        <label><input type="checkbox">Project</label>
        <label><input type="checkbox" checked class="grid place-items-center text-[20px] leading-none after:font-['DejaVu_Sans'] after:content-['✓']">SmartTrack</label>
        <label class="mt-[36px]"><input type="checkbox">Disable all</label>
      </form>
    </aside>

    <!-- Viewport -->
    <section class="flex min-w-0 flex-1 flex-col">
      <div class="flex h-[52px] shrink-0 items-center border-b-2 border-[#757575] bg-linear-to-b from-[#f8f8f8] to-[#dedede] pl-[15px] pr-[23px] text-[26px] text-[#444] [&>button]:pt-[2px]">
        <svg class="h-[36px] w-[42px]" viewBox="0 0 42 36" stroke="#444" stroke-width="2" fill="none"><path d="M1 1h9M19 0v35M40 1v34M1 17h40M1 34h40M1 17v4M26 1h4M1 20h9M28 19h8"/></svg>
        <svg class="ml-[22px] h-[36px] w-[42px]" viewBox="0 0 42 36" stroke="#3b86f7" stroke-width="2" fill="none"><path d="M11 1H1v33h40V0"/></svg>
        <i class="ml-[20px] h-[28px] w-[2px] bg-[#777]"></i>
        <button class="ml-[38px]">Perspective</button>
        <i class="ml-[37px] h-[28px] w-[2px] bg-[#777]"></i>
        <button class="ml-[38px] text-[#1f7cf6]">Top</button>
        <i class="ml-[38px] h-[28px] w-[2px] bg-[#777]"></i>
        <button class="ml-[38px]">Front</button>
        <i class="ml-[38px] h-[28px] w-[2px] bg-[#777]"></i>
        <button class="ml-[38px]">Right</button>
        <button class="ml-auto text-[24px] text-[#222]">Layouts...</button>
      </div>
      <div class="relative min-h-0 flex-1 overflow-hidden bg-[#9ca2aa]">
        <svg class="absolute inset-0 size-full">
          <defs>
            <pattern id="minor" patternUnits="userSpaceOnUse" x="751" y="1400" width="19.470" height="19.470"><path d="M0 1h20M1 0v20" stroke="#90969e" stroke-width="2"/></pattern>
            <pattern id="major" patternUnits="userSpaceOnUse" x="751" y="1400" width="194.700" height="194.700"><path d="M0 1h195M1 0v195" stroke="#82868e" stroke-width="2"/></pattern>
          </defs>
          <g transform="translate(-322 -212)" fill="none" stroke-width="2">
            <path d="M322 212h2377v1730H322z" fill="url(#minor)"/>
            <path d="M322 212h2377v1730H322z" fill="url(#major)"/>
            <path d="M752 212v1189" stroke="#4a984c" stroke-width="4"/>
            <path d="M752 1401h1947" stroke="#9a4447" stroke-width="4"/>
            <g stroke="#4a4a4a">
              <circle cx="1298" cy="859" r="292"/><circle cx="752" cy="1401" r="292"/><circle cx="1298" cy="1401" r="292"/>
              <path d="M999 679h74v195h-74zM1015 679v195M1057 679v195M1000 1380h74v195h-74zM1015 1380v195M1058 1380v195M580 1098h211v59H580zM596 1098v59M775 1098v59M1282 1097h210v59h-210zM1298 1097v59M1477 1097v59"/>
              <path d="M674 1323h156v156H674zM693 1323v156M713 1323v156M732 1323v156M752 1323v156M772 1323v156M791 1323v156M811 1323v156M674 1342h156M674 1362h156M674 1381h156M674 1401h156M674 1420h156M674 1440h156M674 1459h156"/>
            </g>
            <path d="M752 1323v78" stroke="#006000" stroke-width="4"/><path d="M752 1401h78" stroke="#8b0000" stroke-width="4"/>
            <circle cx="757" cy="855" r="292" stroke="#ff0"/>
            <path d="M466 855h293" stroke="#e22" stroke-dasharray="2 3"/><path d="M758 874v264" stroke="#1dff1d" stroke-width="4" stroke-dasharray="1 5"/>
            <path d="m753 860-50 50" stroke="#fff" stroke-dasharray="2 4"/><circle cx="697" cy="915" r="10" stroke="#fff"/>
            <path d="M597 855a160 160 0 0 0 160 160" stroke="#1f1fff" stroke-width="4"/>
            <path d="M778 855h99" stroke="#ff1f1f" stroke-width="4"/><path d="m877 845 41 10-41 10z" fill="#ff1f1f"/>
            <path d="M757 834v-99" stroke="#1dff1d" stroke-width="4"/><path d="m747 735 10-40 10 40z" fill="#1dff1d"/>
            <path d="M457 847h17v17h-17z" stroke="#ff1f1f" stroke-width="4"/><path d="M749 1139h17v17h-17z" stroke="#1dff1d" stroke-width="4"/>
            <path d="M837 735v41M857 735v41M877 735v41" stroke="#1dff1d"/><path d="M837 735h40M837 755h40M837 775h40" stroke="#ff1f1f" stroke-width="2"/>
            <path d="M754 851h6v6h-6z" fill="#fff" stroke="#000" stroke-width="3"/>
            <path d="M394 1806v60h60" stroke="#5f6266"/>
            <g class="font-['Liberation_Sans',sans-serif] text-[22px]" fill="#5f6266"><text x="397" y="1807">y</text><text x="457" y="1867">x</text></g>
          </g>
        </svg>
        <span class="absolute left-[1px] top-[2px] bg-[#84898e] px-[8px] py-[5px] text-[24px] leading-[30px] font-semibold text-white">Top</span>
        <p class="absolute left-[200px] top-[102px] font-['Liberation_Sans',sans-serif] text-[75px] leading-[90px] whitespace-nowrap text-white">I’m actually crying at this point.</p>
      </div>
    </section>

    <!-- Layers and help panel -->
    <aside class="flex w-[600px] shrink-0 flex-col border-l border-[#8a8a8a] bg-white">
      <div class="flex h-[52px] items-center border-b-2 border-[#c9c9c9] bg-linear-to-b from-[#f8f8f8] to-[#dedede] pl-[62px] [&>button]:w-[48px] [&_svg]:mx-auto [&_svg]:h-[36px] [&_svg]:w-[40px] [&_svg]:fill-none [&_svg]:stroke-[#4a4a4a] [&_svg]:stroke-2">
        <button aria-label="Layers"><svg viewBox="0 0 40 36" class="stroke-[#2f80f6]!"><path d="m20 3 18 11-18 11L2 14zM6 19l-4 3 18 11 18-11-4-3"/></svg></button>
        <button aria-label="Properties"><svg viewBox="0 0 40 36"><circle cx="20" cy="18" r="16"/><circle cx="20" cy="18" r="8"/></svg></button>
        <button aria-label="Notes"><svg viewBox="0 0 40 36"><path d="M9 2h14l8 8v23H9zM23 2v8h8"/></svg></button>
        <button aria-label="Blocks"><svg viewBox="0 0 40 36"><path d="m7 11 12-9 14 7-1 17-13 8L7 27zM7 11l12 6 13-8M19 17v17"/></svg></button>
        <button aria-label="Camera"><svg viewBox="0 0 40 36"><path d="M2 9h9l3-5h12l3 5h9v22H2z"/><circle cx="20" cy="20" r="9"/><circle cx="20" cy="20" r="5"/></svg></button>
        <button aria-label="CPlanes"><svg viewBox="0 0 40 36"><path d="M12 7 2 26l24 6L38 12zM20 9 10 28M29 10 18 30M9 13l25 5M5 20l26 5"/></svg></button>
        <button aria-label="Script"><svg viewBox="0 0 40 36"><path d="M9 27V6q0-4 5-4h22q-4 1-4 6h-5v21q0 4-5 4H5q4-1 3-6h15v6"/></svg></button>
        <button aria-label="Page"><svg viewBox="0 0 40 36"><path d="M5 3h30v30H5zM5 6h8"/></svg></button>
        <button aria-label="Display"><svg viewBox="0 0 40 36"><path d="M3 3h34v25H3zM7 7h26v17H7zM15 33h10M20 28v5"/></svg></button>
        <button aria-label="Help" class="text-[40px] leading-none font-black text-[#3a3a3a]">?</button>
      </div>
      <table class="w-full table-fixed border-collapse text-left text-[21px] [&_td]:p-0 [&_th]:p-0 [&_th]:font-normal [&_td>svg]:mx-auto [&_td>svg]:block">
        <colgroup><col class="w-[83px]"><col class="w-[46px]"><col class="w-[46px]"><col class="w-[46px]"><col class="w-[60px]"><col class="w-[48px]"><col class="w-[114px]"><col class="w-[46px]"><col class="w-[110px]"></colgroup>
        <thead><tr class="h-[48px] border-b-2 border-[#c9c9c9] bg-[#f5f5f5] [&>th>span]:flex [&>th>span]:h-[34px] [&>th>span]:items-center [&>th>span]:border-r-2 [&>th>span]:border-[#dadada]"><th><span class="pl-[9px]">Name</span></th><th><span></span></th><th><span></span></th><th><span></span></th><th><span></span></th><th><span></span></th><th><span class="pl-[10px]">Linetype</span></th><th><span></span></th><th class="pl-[9px]!">Print…</th></tr></thead>
        <tbody>
          <tr class="h-[34px]"><td class="pl-[41px]!">D…</td><td><svg class="size-[28px]" viewBox="0 0 28 28"><circle cx="14" cy="14" r="13" fill="#fff" stroke="#aaa"/><circle cx="14" cy="14" r="4" fill="#333"/></svg></td><td><svg class="size-[28px]" viewBox="0 0 28 28"><path d="M14 1C2 1 3 12 10 18v5h8v-5c7-6 8-17-4-17z" fill="#fbe3a2"/><path d="M10 21h8l-2 7h-4z" fill="#dde2e6"/></svg></td><td><svg class="size-[28px]" viewBox="0 0 28 28"><path d="M17 12V7a4 4 0 0 1 9 0v4" fill="none" stroke="#c9c9c9" stroke-width="2"/><path d="M4 12h16v15H4z" fill="#edcfa6"/></svg></td><td><svg class="size-[28px]" viewBox="0 0 28 28"><path d="M0 0h28v28H0z"/></svg></td><td><svg class="size-[24px]" viewBox="0 0 24 24"><circle cx="12" cy="12" r="11" fill="url(#grey)"/><path d="M14 1a11 11 0 0 1 0 22q-8-1-10-6 12 2 10-16z" fill="#111" opacity=".75"/></svg></td><td class="pl-[14px]! whitespace-nowrap">Conti…<svg class="ml-[4px]! inline! h-[24px] w-[14px]" viewBox="0 0 14 24" fill="none" stroke="#444" stroke-width="2"><path d="m2 8 5-6 5 6M2 16l5 6 5-6"/></svg></td><td><svg class="size-[30px]" viewBox="0 0 30 30"><path d="m15 0 15 15-15 15L0 15z"/></svg></td><td class="pl-[14px]! whitespace-nowrap">Defa…<svg class="ml-[6px]! inline! h-[24px] w-[14px]" viewBox="0 0 14 24" fill="none" stroke="#444" stroke-width="2"><path d="m2 8 5-6 5 6M2 16l5 6 5-6"/></svg></td></tr>
          <tr class="h-[34px]"><td class="pl-[41px]!">L…</td><td><svg class="size-[28px]" viewBox="0 0 28 28"><circle cx="14" cy="14" r="13" fill="#fff" stroke="#aaa"/></svg></td><td><svg class="size-[28px]" viewBox="0 0 28 28"><path d="M14 1C2 1 3 12 10 18v5h8v-5c7-6 8-17-4-17z" fill="#f1b42c"/></svg></td><td><svg class="size-[28px]" viewBox="0 0 28 28"><path d="M17 12V7a4 4 0 0 1 9 0v4" fill="none" stroke="#888" stroke-width="2"/><path d="M4 12h16v15H4z" fill="#d08f3a"/></svg></td><td><svg class="size-[28px]" viewBox="0 0 28 28"><path d="M1 1h26v26H1z" fill="#e23b22" stroke="#000" stroke-width="2"/></svg></td><td><svg class="size-[24px]" viewBox="0 0 24 24"><circle cx="12" cy="12" r="11" fill="url(#grey)"/><path d="M14 1a11 11 0 0 1 0 22q-8-1-10-6 12 2 10-16z" fill="#111" opacity=".75"/></svg></td><td class="pl-[14px]! whitespace-nowrap">Conti…<svg class="ml-[4px]! inline! h-[24px] w-[14px]" viewBox="0 0 14 24" fill="none" stroke="#444" stroke-width="2"><path d="m2 8 5-6 5 6M2 16l5 6 5-6"/></svg></td><td><svg class="size-[30px]" viewBox="0 0 30 30"><path d="m15 1 14 14-14 14L1 15z" fill="#e23b22" stroke="#000" stroke-width="2"/></svg></td><td class="pl-[14px]! whitespace-nowrap">Defa…<svg class="ml-[6px]! inline! h-[24px] w-[14px]" viewBox="0 0 14 24" fill="none" stroke="#444" stroke-width="2"><path d="m2 8 5-6 5 6M2 16l5 6 5-6"/></svg></td></tr>
        </tbody>
      </table>
      <div class="mt-auto mr-[28px] h-[92px] overflow-hidden border-r-2 border-b-2 border-[#c9c9c9] font-['Liberation_Sans',sans-serif] text-[26px] leading-[31px] text-black">
        <h2 class="mx-[20px] border-b-2 border-[#888] pt-[3px] font-bold">Notes</h2>
        <ul class="mt-[11px] pl-[91px]"><li class="relative whitespace-nowrap before:absolute before:-left-[38px] before:top-[8px] before:size-[14px] before:rounded-full before:bg-[#8b1010]">Join does not change the surfaces. It is<br>merely a test to see if the surfaces</li></ul>
      </div>
      <div class="h-[30px] bg-[#f2f2f2] px-[7px] pt-[7px]"><div class="h-[16px] w-[523px] rounded-full bg-[#bcbcbc]"></div></div>
    </aside>
  </div>

  <footer class="flex h-[56px] shrink-0 items-center bg-linear-to-b from-[#d6d6d6] to-[#c4c4c4] pt-[2px] pl-[9px] text-[21px] text-black">
    <svg class="h-[22px] w-[28px]" viewBox="0 0 28 22" stroke="#777" stroke-width="2"><path d="M0 2h28M0 8h28M0 14h28M0 20h28"/></svg>
    <span class="ml-[6px] text-[22px]">1 curve added to selection.</span>
    <div class="ml-auto flex w-[1021px] items-center whitespace-nowrap text-[#222]">
      <span class="w-[147px]">Millimeters</span>
      <span class="relative"><select disabled aria-label="Construction plane" class="h-[32px] w-[138px] appearance-none rounded-[7px] border-2 border-[#a5a5a5] px-[11px] text-[21px] text-[#a0a0a0] opacity-100"><option>CPlane</option></select><svg class="absolute top-[5px] right-[10px] h-[22px] w-[12px]" viewBox="0 0 12 22" fill="none" stroke="#a0a0a0" stroke-width="2"><path d="m1 7 5-5 5 5M1 15l5 5 5-5"/></svg></span>
      <span class="ml-[28px] w-[165px]">X: 36.925</span><span class="w-[170px]">Y: 61.891</span><span>Z: 0.000</span>
    </div>
  </footer>
</main>

<!-- Grasshopper window -->
<section class="absolute top-[312px] right-0 bottom-64 left-[1654px] flex flex-col overflow-hidden rounded-l-[12px] bg-white font-['Liberation_Sans',sans-serif] shadow-[0_25px_70px_rgba(0,0,0,0.6)]">
  <div class="flex h-[44px] shrink-0 items-center border-b-2 border-[#adadad] bg-linear-to-b from-[#e6e6e6] to-[#cbcbcb]">
    <div class="flex gap-[16px] pl-[15px]"><i class="size-[24px] rounded-full bg-[#ee6a5f]"></i><i class="size-[24px] rounded-full bg-[#f5bf4f]"></i><i class="size-[24px] rounded-full bg-[#62c554]"></i></div>
    <h2 class="ml-[722px] pt-[2px] font-['Inter',sans-serif] text-[25px] whitespace-nowrap text-[#4a4a4a]">Grasshopper - f.2.2_operators and conditionals*</h2>
  </div>
  <nav class="flex h-[46px] shrink-0 items-center gap-[25px] border-b-2 border-[#a0a0a0] pt-[2px] text-[23px] text-[#7d7d72]">
    <button class="-mr-[13px] -mb-[2px] ml-[1px] h-[44px] rounded-t-[10px] border-2 border-b-0 border-[#a0a0a0] bg-linear-to-b from-white to-[#ececec] px-[10px] pb-[6px] text-black">Params</button>
    <button>Maths</button><button>Sets</button><button>Vector</button><button>Curve</button><button>Surface</button><button>Mesh</button><button>Intersect</button><button>Transform</button><button>Display</button>
  </nav>
  <div class="flex h-[118px] shrink-0 gap-[7px] border-b-2 border-[#b8b8b8] bg-[linear-gradient(#e2e2e2,#ffffff_80%)] pt-[5px] pl-[7px] [&>div]:flex [&>div]:h-[90px] [&>div]:shrink-0 [&>div]:flex-col [&>div]:overflow-hidden [&>div]:rounded-[8px] [&>div]:border-2 [&>div]:border-[#8c8c8c] [&>div]:bg-linear-to-b [&>div]:from-[#f4f4f4] [&>div]:to-[#ededed] [&>div>div]:flex [&>div>div]:h-[59px] [&>div>div]:items-center [&>div>div]:gap-[10px] [&>div>div]:px-[7px] [&_svg]:h-[48px] [&_svg]:w-[46px] [&_svg]:overflow-visible [&>div>div>i]:mx-[4px] [&>div>div>i]:h-[46px] [&>div>div>i]:w-[2px] [&>div>div>i]:bg-[#c9c9c9] [&>div>p]:flex [&>div>p]:flex-1 [&>div>p]:items-center [&>div>p]:justify-center [&>div>p]:bg-linear-to-b [&>div>p]:from-[#333] [&>div>p]:to-[#151515] [&>div>p]:pr-[22px] [&>div>p]:text-[20px] [&>div>p]:text-white [&>div>p>b]:absolute [&>div>p>b]:right-[6px] [&>div>p>b]:text-[#999] [&>div>p]:relative">
    <div><div>
      <button aria-label="Geometry"><svg viewBox="0 -3 46 48"><use href="#hex"/><path d="m17 14 12 14M29 14 17 28" stroke="#fff" stroke-width="5"/></svg></button>
      <button aria-label="Vector"><svg viewBox="0 -3 46 48"><use href="#hex"/><path d="m14 30 13-13" stroke="#fff" stroke-width="5"/><path d="M20 11h14v14z" fill="#fff"/></svg></button>
      <i></i>
      <button aria-label="Circle"><svg viewBox="0 -3 46 48"><use href="#hex"/><circle cx="23" cy="21" r="10" fill="none" stroke="#fff" stroke-width="3.500"/></svg></button>
      <button aria-label="Arc"><svg viewBox="0 -3 46 48"><use href="#hex"/><path d="M14 8q16 8 18 25M25 33h12" fill="none" stroke="#fff" stroke-width="3"/></svg></button>
      <button aria-label="Curve"><svg viewBox="0 -3 46 48"><use href="#hex"/><g fill="none" stroke="#ddd" stroke-width="2.500" transform="rotate(-45 23 21)"><ellipse cx="23" cy="21" rx="16" ry="8"/><ellipse cx="24" cy="21" rx="9" ry="4"/></g></svg></button>
      <button aria-label="Line"><svg viewBox="0 -3 46 48"><use href="#hex"/><path d="M15 30 31 13" stroke="#fff" stroke-width="3"/><path d="M12 27h7v7h-7zM28 10h7v7h-7z" fill="#222" stroke="#fff" stroke-width="2"/></svg></button>
      <button aria-label="Plane"><svg viewBox="0 -3 46 48"><use href="#hex"/><path d="m9 20 20-12 9 11-21 14z" fill="#777" stroke="#fff" stroke-width="3"/><path d="m17 22 14-8" stroke="#ddd" stroke-width="2"/></svg></button>
      <button aria-label="Rectangle"><svg viewBox="0 -3 46 48"><use href="#hex"/><path d="m12 6 22 28M34 6 12 34" stroke="#999" stroke-width="2"/><path d="m23 10 10 11-10 11-10-11z" fill="#222" stroke="#fff" stroke-width="3"/></svg></button>
      <i></i>
      <button aria-label="Box"><svg viewBox="0 -3 46 48"><use href="#hex"/><path d="m13 14 8-6 13 5v16l-10 7-11-5z" fill="#bbb" stroke="#fff"/><path d="m13 14 11 4 10-5-13-5z" fill="#eee"/></svg></button>
      <button aria-label="Brep"><svg viewBox="0 -3 46 48"><use href="#hex"/><path d="m11 20 13-13 12 8-1 9-13 12-11-7z" fill="#c8c8c8" stroke="#fff"/><ellipse cx="29" cy="13" rx="6" ry="5" fill="#777" stroke="#fff"/></svg></button>
      <button aria-label="Mesh"><svg viewBox="0 -3 46 48"><use href="#hex"/><path d="M13 11h20v20H13zM13 21h20M23 6v30M13 11l20 20M33 11 13 31" fill="none" stroke="#bbb" stroke-width="2"/></svg></button>
      <button aria-label="Surface"><svg viewBox="0 -3 46 48"><use href="#hex"/><path d="M18 9q8-4 15-1v28H20l-10-8q6-6 8-19z" fill="#aaa" stroke="#fff" stroke-width="2"/><path d="M25 8v27M14 22h19" stroke="#eee"/></svg></button>
    </div><p>Geometry<b>+</b></p></div>
    <div><div>
      <button aria-label="Boolean"><svg viewBox="0 -3 46 48"><use href="#hex"/><circle cx="23" cy="21" r="12" fill="#fff"/><path d="M29 14a8 8 0 0 1-12 12z" fill="#111"/></svg></button>
      <button aria-label="Integer"><svg viewBox="0 -3 46 48"><use href="#hex"/><text x="23" y="32" text-anchor="middle" font-size="30" font-weight="700" font-family="Liberation Sans" fill="#fff">7</text></svg></button>
      <button aria-label="Number"><svg viewBox="0 -3 46 48"><use href="#hex"/><text x="23" y="30" text-anchor="middle" font-size="24" font-weight="700" font-family="Liberation Serif" fill="#ddd">0.1</text></svg></button>
      <button aria-label="Text"><svg viewBox="0 -3 46 48"><use href="#hex"/><text x="23" y="33" text-anchor="middle" font-size="34" font-weight="700" font-family="Liberation Serif" fill="#fff">A</text></svg></button>
    </div><p>Primitive<b>+</b></p></div>
    <div><div>
      <button aria-label="Button"><svg viewBox="0 0 46 48"><use href="#tilebox"/><path d="M23 12v10M8 38h30M10 39v5M15 39v5M20 39v5M25 39v5M30 39v5M35 39v5" stroke="#000" stroke-width="3"/><path d="M15 22h16l-8 12z"/></svg></button>
      <button aria-label="Gradient"><svg viewBox="0 0 46 48"><rect x="1" y="1" width="44" height="46" rx="4" fill="#fccf55" stroke="#111" stroke-width="2"/><path d="M7 37c5-14 9-12 6-3s3 2 8-8 5-3 2 5 5 0 8-11 6-12 4 0 0 9 4 2" fill="none" stroke="#a45a17" stroke-width="4"/></svg></button>
      <i></i>
      <button aria-label="Toggle"><svg viewBox="0 0 46 48"><use href="#tilebox"/><path d="M14 7h18v36H14z" fill="#222" stroke="#000" stroke-width="2"/><path d="M16 9h14v16H16z" fill="#ddd"/></svg></button>
      <button aria-label="Knob"><svg viewBox="0 0 46 48"><circle cx="23" cy="24" r="22" fill="#aaa" stroke="#222" stroke-width="2"/><path d="m44 24-9 10a16 16 0 1 1 0-20z" fill="#333" stroke="#000" stroke-width="2"/></svg></button>
      <button aria-label="Scroller"><svg viewBox="0 0 46 48"><use href="#tilebox"/><path d="m21 2-7 13h16M26 4l-3 14" fill="none" stroke="#777" stroke-width="4"/><path d="M31 24H19l-3 10c12-2 15 10-2 11" fill="none" stroke="#222" stroke-width="5"/></svg></button>
      <button aria-label="List"><svg viewBox="0 0 46 48"><use href="#tilebox"/><path d="M6 8h34v8H6zM6 21h34v8H6zM6 34h34v8H6z" fill="#ddd" stroke="#111" stroke-width="2"/></svg></button>
      <i></i>
      <button aria-label="Range"><svg viewBox="0 0 46 48"><defs><linearGradient id="pink" x1=".8" y1="0" x2=".2" y2="1"><stop offset="0" stop-color="#b98aa8"/><stop offset=".55" stop-color="#ec2f86"/><stop offset="1" stop-color="#ff9fd0"/></linearGradient></defs><rect x="1" y="1" width="44" height="46" rx="4" fill="url(#pink)" stroke="#111" stroke-width="2"/><path d="M2 31h42" stroke="#222" stroke-width="2"/><circle cx="4" cy="31" r="3.500" fill="#fff" stroke="#000" stroke-width="2"/><circle cx="32" cy="31" r="4" fill="#fff" stroke="#000" stroke-width="2"/></svg></button>
      <button aria-label="Image"><svg viewBox="0 0 46 48"><rect x="1" y="1" width="44" height="46" rx="4" fill="#5fc22b" stroke="#111" stroke-width="2"/><path d="M2 2h11v11H2zM24 13h10v11H24zM34 24h10v-9h-10z" fill="#c9f58a"/><path d="M13 13h11v11H13zM2 24h11v11H2zM24 35h10v11H24z" fill="#2c8a1d"/><path d="M13 24h11v11H13z" fill="#a7ee3d"/><path d="M2 35h11v11H2z" fill="#16460d"/><path d="M34 35h10v11H34z" fill="#7ff5c0"/></svg></button>
    </div><p>Input<b>+</b></p></div>
    <div class="w-[382px]"><div>
      <button aria-label="Cherry picker"><svg viewBox="0 0 46 48"><path d="M13 28Q18 14 26 6q6 14 5 30M26 6q-4 10-12 28" fill="none" stroke="#6a3a1a" stroke-width="2"/><path d="M6 14Q8 3 23 3q-2 12-17 11z" fill="#4fae2b"/><circle cx="12" cy="32" r="9" fill="#d32323"/><circle cx="33" cy="38" r="9" fill="#d32323"/><circle cx="9" cy="29" r="2" fill="#fff"/><circle cx="30" cy="35" r="2" fill="#fff"/></svg></button>
      <button aria-label="Tree"><svg viewBox="0 0 46 48"><use href="#tilebox"/><path d="M2 42h42v4H2z"/><path d="M23 44V24" stroke="#000" stroke-width="6"/><path d="M23 32 9 22M23 30l15-10M23 26l-8-16M23 24l8-16M9 22l-4-5M9 22l2-11M38 20l3-6M38 20l-4-10M17 16l-6-6M29 15l8-6M23 24V6" stroke="#000" stroke-width="2.500"/></svg></button>
      <i></i>
      <button aria-label="Data input"><svg viewBox="0 0 46 48"><path d="M4 16h17V7l20 17-20 17v-9H4z" fill="#555" stroke="#222" stroke-width="3"/></svg></button>
      <button aria-label="Data output"><svg viewBox="0 0 46 48"><path d="M4 16h17V7l20 17-20 17v-9H4z" fill="#fff" stroke="#888" stroke-width="3"/></svg></button>
    </div><p>Util</p></div>
  </div>
  <div class="flex h-[63px] shrink-0 items-center gap-[11px] pb-[4px] pl-[8px] [&>button]:grid [&>button]:h-[40px] [&>button]:w-[65px] [&>button]:place-items-center [&>button]:rounded-[7px] [&>button]:border [&>button]:border-[#c8c8c8] [&>button]:bg-white [&>button]:shadow-sm [&>button>svg]:size-[32px]">
    <button aria-label="Open"><svg viewBox="0 0 32 32"><path d="M6 20V6l5-5h10v19z" fill="#e3e3e3" stroke="#888"/><path d="M3 17h7l2-4h9v-3h7v21H3z" fill="#8ac63f" stroke="#5a9a20"/></svg></button>
    <button aria-label="Save"><svg viewBox="0 0 32 32"><path d="M2 2h28v29H5l-3-3z" fill="#2f66d8" stroke="#1c3f96" stroke-width="2"/><path d="M8 2h16v12H8z" fill="#e4e8ee"/><path d="M9 20h14v11H9z" fill="#d9dce2"/><path d="M11 22h5v8h-5z" fill="#2346a8"/></svg></button>
    <i class="-mr-[6px] h-[32px] w-[2px] bg-[#d5d5d5]"></i>
    <span class="relative"><select aria-label="Zoom" class="block h-[40px] w-[132px] appearance-none border-2 border-[#b8b8b8] bg-white pb-[8px] pl-[4px] text-[20px] text-black"><option>74%</option></select><span class="pointer-events-none absolute top-0 right-0 grid h-[40px] w-[35px] place-items-center rounded-r-[6px] bg-linear-to-b from-[#6fa3f6] to-[#2268f5]"><svg class="h-[10px] w-[16px]" viewBox="0 0 16 10" fill="none" stroke="#fff" stroke-width="3"><path d="m2 2 6 6 6-6"/></svg></span></span>
    <button aria-label="Zoom extents"><svg viewBox="0 0 32 32"><path d="M3 10V3h9M20 3h9v7M29 22v7h-9M12 29H3v-7" fill="none" stroke="#222" stroke-width="5"/><path d="m12 12 8 8M20 12l-8 8" stroke="#333" stroke-width="3"/></svg></button>
    <button aria-label="Preview"><svg viewBox="0 0 32 32"><path d="M2 16Q9 6 16 6t14 10Q23 26 16 26T2 16z" fill="#f4f4f4" stroke="#777" stroke-width="2"/><circle cx="16" cy="16" r="8" fill="#3f9fd8" stroke="#19608c"/><circle cx="16" cy="16" r="4" fill="#062233"/></svg></button>
    <button aria-label="Sketch"><svg viewBox="0 0 32 32"><path d="M29 2c1 10-1 17-7 24l-7-6C16 13 22 6 29 2z" fill="#e4452e"/><path d="m15 19 7 6-6 4c-2-2-3-5-1-10z" fill="#f2a93b"/><path d="M9 14c-6 2-3 5 0 8s-1 5-4 5 2 3 6 3 6-2 6-3" fill="none" stroke="#511" stroke-width="2.500"/></svg></button>
  </div>

  <!-- Definition canvas -->
  <div class="relative min-h-0 flex-1 overflow-hidden border-b-2 border-[#bdbdbd] bg-[#dcd9d2]">
    <svg class="absolute inset-0 size-full font-['Liberation_Sans',sans-serif]">
      <defs>
        <pattern id="cv" patternUnits="userSpaceOnUse" x="2172" y="617" width="221.500" height="73.700"><path d="M0 1h222M1 0v74" stroke="#c0bdb8" stroke-width="3"/></pattern>
        <linearGradient id="rim" x1="0" y1="0" x2="0" y2="1"><stop offset="0" stop-color="#aeaebe"/><stop offset="1" stop-color="#8c8b9b"/></linearGradient>
        <linearGradient id="well" x1="0" y1="0" x2="0" y2="1"><stop offset="0" stop-color="#8d8d94"/><stop offset=".07" stop-color="#c9cad2"/><stop offset=".93" stop-color="#bcbcc6"/><stop offset="1" stop-color="#86868d"/></linearGradient>
        <linearGradient id="pit" x1="0" y1="0" x2="0" y2="1"><stop offset="0" stop-color="#d2d3d9"/><stop offset="1" stop-color="#c2c3ca"/></linearGradient>
        <linearGradient id="paper" x1="0" y1="1" x2=".7" y2="0"><stop offset="0" stop-color="#d2d2da"/><stop offset=".6" stop-color="#f9f9fa"/><stop offset="1" stop-color="#fff"/></linearGradient>
        <linearGradient id="body" x1="0" y1="0" x2="0" y2="1"><stop offset="0" stop-color="#efefef"/><stop offset="1" stop-color="#c6c6c6"/></linearGradient>
        <linearGradient id="side" x1="0" y1="0" x2="1" y2="0"><stop offset="0" stop-color="#555" stop-opacity=".35"/><stop offset=".06" stop-color="#555" stop-opacity="0"/><stop offset=".94" stop-color="#555" stop-opacity="0"/><stop offset="1" stop-color="#555" stop-opacity=".35"/></linearGradient>
        <g id="out"><path d="M0-7a7 7 0 0 1 0 14z" fill="#fff"/><path d="M0-7a7 7 0 0 1 0 14" fill="none" stroke="#000" stroke-width="2.500"/></g>
        <g id="in"><path d="M0-7a7 7 0 0 0 0 14z" fill="#fff"/><path d="M0-7a7 7 0 0 0 0 14" fill="none" stroke="#000" stroke-width="2.500"/></g>
        <g id="md"><use href="#out" x="297" y="148"/><rect x="1" y="1" width="294" height="294" rx="7" fill="url(#rim)" stroke="#45454e" stroke-width="2"/><rect x="9" y="9" width="278" height="278" fill="url(#well)" stroke="#0c0c0c" stroke-width="2"/><rect x="10" y="10" width="276" height="276" fill="url(#side)"/><rect x="27" y="27" width="242" height="242" fill="url(#pit)"/><path d="M51 27v242M75 27v242M100 27v242M124 27v242M148 27v242M172 27v242M197 27v242M221 27v242M245 27v242M27 51h242M27 75h242M27 100h242M27 124h242M27 148h242M27 172h242M27 197h242M27 221h242M27 245h242" stroke="#5a5a66" stroke-opacity=".25" stroke-width="2"/><path d="M27 27h242v242H27z" fill="none" stroke="#111" stroke-width="2" stroke-dasharray="3 3"/></g>
        <g id="knob"><circle r="6" fill="#fff" stroke="#000" stroke-width="3"/><path d="m-4-6 4 5 4-5" fill="none" stroke="#000" stroke-width="1.500"/></g>
        <g id="left"><path d="M0-8 15 0 0 8z"/></g><g id="up"><path d="M-8 14 0 0l8 14z"/></g>
        <g id="ns"><use href="#out" x="229" y="15"/><rect x="1" y="1" width="227" height="29" rx="4" fill="url(#body)" stroke="#444" stroke-width="2"/><path d="M50 2H5Q2 2 2 5v21q0 3 3 3h45z" fill="url(#rim)"/><path d="M51 1v29" stroke="#444" stroke-width="2"/><path d="M65 8v8h148V8M139 12v4M154 10v6M169 10v6M183 10v6M198 10v6" fill="none" stroke="#aaa" stroke-width="2"/><path d="M76 6h52v18H76z" fill="#dcdcdc"/><circle cx="140" cy="15" r="5" fill="#fff" stroke="#000" stroke-width="3"/><text x="7" y="20" font-size="12">Radius</text><text x="79" y="21" font-size="16" stroke="#000" stroke-width=".3">15.000</text></g>
        <g id="cir"><use href="#in" x="-1" y="18"/><use href="#in" x="-1" y="48"/><use href="#out" x="83" y="33"/><rect x="1" y="1" width="80" height="64" rx="4" fill="url(#body)" stroke="#444" stroke-width="2"/><rect x="21" y="4" width="35" height="59" rx="5" fill="#404040" stroke="#000" stroke-width="2"/><path d="M24 7h29" stroke="#888"/><text x="8" y="22" font-size="12">P</text><text x="8" y="52" font-size="12">R</text><text x="60" y="37" font-size="12">C</text><text transform="translate(43 42) rotate(-90)" font-size="14" font-weight="700" fill="#fff">Cir</text></g>
      </defs>
      <g transform="translate(-1654 -583)">
        <path d="M1654 583h1710v1220H1654z" fill="url(#cv)"/>
        <g fill="none" stroke="#5c5b58" stroke-width="5">
          <path d="M2306 776C2510 776 2510 724 2712 724M2606 754h106M2613 852h38M2300 1152C2520 1152 2520 1184 2738 1184M2630 1214h108M2317 1486C2533 1486 2533 1527 2748 1527M2649 1547C2699 1547 2699 1557 2748 1557M3227 912C3290 912 3330 920 3364 927"/>
        </g>
        <g stroke-width="2">
          <g transform="translate(2006 628)"><use href="#md"/><path d="M27 209h228v60H27z" fill="url(#paper)" fill-opacity=".85" stroke="#000"/><use href="#left" x="11" y="208"/><use href="#up" x="254" y="270"/><path d="M219 186h50v15h-50z" fill="#f3f3f3" stroke="#000"/><text x="222" y="197" font-size="9">28.05 ; 0.0</text><use href="#knob" x="254" y="208"/></g>
          <g transform="translate(1999 1004)"><use href="#md"/><path d="M27 53h236v216H27z" fill="url(#paper)" fill-opacity=".85" stroke="#000"/><use href="#left" x="11" y="53"/><use href="#up" x="262" y="270"/><path d="M214 29h55v15h-55z" fill="#f3f3f3" stroke="#000"/><text x="218" y="40" font-size="9">28.05 ; 27.8</text><use href="#knob" x="263" y="53"/></g>
          <g transform="translate(2017 1338)"><use href="#md"/><path d="M27 51h152v218H27z" fill="url(#paper)" fill-opacity=".85" stroke="#000"/><use href="#left" x="11" y="51"/><use href="#up" x="178" y="270"/><path d="M150 27h55v15h-55z" fill="#f3f3f3" stroke="#000"/><text x="154" y="38" font-size="9">0.24 ; 28.05</text><use href="#knob" x="178" y="51"/></g>
          <g transform="translate(2925 765)"><use href="#md"/><path d="M27 148h121v121H27z" fill="url(#paper)" fill-opacity=".85" stroke="#000"/><use href="#left" x="11" y="148"/><use href="#up" x="147" y="270"/><path d="M119 125h56v15h-56z" fill="#f3f3f3" stroke="#000"/><text x="123" y="136" font-size="9">15.0 ; 14.06</text><use href="#knob" x="148" y="149"/></g>
          <g transform="translate(3258 941)"><use href="#md"/><path d="M27 137h121v132H27z" fill="url(#paper)" fill-opacity=".85" stroke="#000"/><use href="#left" x="11" y="137"/><use href="#up" x="101" y="270"/><path d="M73 114h56v15H73z" fill="#f3f3f3" stroke="#000"/><text x="77" y="125" font-size="9">13.48 ;</text><use href="#knob" x="101" y="138"/></g>
        </g>
        <use href="#ns" x="2374" y="739"/><use href="#ns" x="2382" y="837"/><use href="#ns" x="2399" y="1199"/><use href="#ns" x="2417" y="1532"/>
        <use href="#cir" x="2717" y="706"/><use href="#cir" x="2655" y="804"/><use href="#cir" x="2742" y="1166"/><use href="#cir" x="2752" y="1509"/>
        <g stroke="#444" stroke-width="2" font-size="12">
          <rect x="3290" y="1252" width="120" height="29" rx="5" fill="url(#body)"/><path d="M3319 1252h-25q-4 0-4 4v21q0 4 4 4h25z" fill="url(#rim)"/><path d="M3334 1259v8h40M3351 1262v5" fill="none" stroke="#aaa"/><text x="3300" y="1271" fill="#000" stroke="none">A</text>
          <rect x="3303" y="1300" width="120" height="29" rx="5" fill="url(#body)"/><path d="M3353 1300h-46q-4 0-4 4v21q0 4 4 4h46z" fill="url(#rim)"/><text x="3310" y="1319" fill="#000" stroke="none">Y Size</text>
          <rect x="3326" y="1512" width="120" height="29" rx="5" fill="url(#body)"/><path d="M3355 1512h-25q-4 0-4 4v21q0 4 4 4h25z" fill="url(#rim)"/><text x="3336" y="1531" fill="#000" stroke="none">B</text>
        </g>
      </g>
    </svg>
    <div class="absolute bottom-0 left-0 flex h-[54px] w-[128px] items-center gap-[8px] border-2 border-[#222] bg-linear-to-b from-[#ddd] to-[#999] pt-[2px] pl-[6px]">
      <svg class="h-[44px] w-[46px]" viewBox="0 0 46 44"><path d="M6 22C0 14 6 5 14 8c5-6 15-2 13 6 3 3 2 5 0 6 8-3 17 4 14 12s-12 10-17 5c-7 3-13-2-11-9-4 1-6-2-7-6z" fill="#f29a2e" stroke="#8a4a08" stroke-width="2"/><path d="M13 28c3-6 8-8 14-8M10 14c5 0 8 2 9 6" fill="none" stroke="#b56a14" stroke-width="2"/></svg>
      <svg class="h-[46px] w-[48px]" viewBox="0 0 46 44"><use href="#hex"/><path d="m14 30 13-13" stroke="#fff" stroke-width="5"/><path d="M20 11h14v14z" fill="#fff"/></svg>
    </div>
  </div>
  <div class="h-[47px] shrink-0 bg-white"></div>
</section>

<!-- Dock -->
<nav aria-label="Dock" class="mx-[63px] mt-[8px] grid h-[98px] shrink-0 grid-cols-[repeat(33,1fr)_36px_repeat(4,1fr)_36px_repeat(2,1fr)] rounded-t-[10px] border-2 border-b-0 border-[#4b4b4b] bg-[linear-gradient(90deg,#22261c_0%,#20261f_20%,#25342c_32%,#333_45%,#2c2c2c_60%,#262626_90%,#1e2622_100%)] px-[2px] pt-[7px] [&_svg]:size-[70px] [&>button]:flex [&>button]:flex-col [&>button]:items-center [&_i]:mt-[6px] [&_i]:size-[7px] [&_i]:rounded-full [&_i]:bg-[#a9a9a9]">
  <button aria-label="Finder"><svg viewBox="0 0 70 70"><rect x="4" y="7" width="62" height="59" rx="3" fill="#e9eff8"/><path d="M7 7h34c-6 14-8 22-8 34h8l1 25H7q-3 0-3-3V10q0-3 3-3z" fill="#3f95f2"/><path d="M20 23v8M50 23v8M14 46q21 16 42 0" fill="none" stroke="#143a6b" stroke-width="3"/><path d="M41 7c-6 14-8 22-8 34h8l1 25" fill="none" stroke="#143a6b" stroke-width="2"/></svg><i></i></button>
  <button aria-label="Siri"><svg viewBox="0 0 70 70"><circle cx="35" cy="37" r="31" fill="url(#siri)" stroke="#d5d5dd" stroke-width="3"/><path d="M10 40q24-4 26-24 4 20 24 20-18 4-20 26-6-20-30-22z" fill="#8ff5ec" opacity=".6"/><circle cx="37" cy="37" r="6" fill="#fff" opacity=".9"/></svg></button>
  <button aria-label="Chrome"><svg viewBox="0 0 70 70"><circle cx="35" cy="36" r="33" fill="#4aa35c"/><path d="M35 36 6 20a33 33 0 0 1 58 0z" fill="#d9483b"/><path d="M35 20h29a33 33 0 0 1-30 49z" fill="#fbc84b"/><circle cx="35" cy="36" r="16" fill="#f4f4f4"/><circle cx="35" cy="36" r="12.500" fill="#4b86ee"/></svg><i></i></button>
  <button aria-label="Safari"><svg viewBox="0 0 70 70"><circle cx="35" cy="37" r="32" fill="#2f8fe8" stroke="#e6e6e6" stroke-width="4"/><circle cx="35" cy="37" r="26" fill="none" stroke="#cfe8fb" stroke-width="4" stroke-dasharray="1 3"/><path d="M55 16 39 41l-8-8z" fill="#f0433b"/><path d="m15 58 16-25 8 8z" fill="#fff"/></svg></button>
  <button aria-label="Launchpad"><svg viewBox="0 0 70 70"><circle cx="35" cy="37" r="32" fill="#a9b3ba" stroke="#c9cfd3" stroke-width="2"/><path d="M53 17c-11 0-19 6-23 14l-10 4-6 9 12-2 7 7-2 12 9-6 3-10c8-5 11-16 10-28z" fill="#3b4045"/><circle cx="41" cy="30" r="4" fill="#b9c3c9"/></svg></button>
  <button aria-label="Contacts"><svg viewBox="0 0 70 70"><path d="M50 14h7l4 40-8 5z" fill="#59a6c9"/><path d="M58 34h3l2 22-6 3z" fill="#e5b03b"/><path d="m6 9 44-7 8 60-44 8z" fill="#a77a45"/><path d="m6 9 5-1 8 61-5 1z" fill="#8a6131"/><circle cx="34" cy="35" r="14" fill="#8e6535"/><circle cx="34" cy="31" r="5" fill="#a77a45"/><path d="M25 44q9-10 18 0z" fill="#a77a45"/></svg></button>
  <button aria-label="Mail"><svg viewBox="0 0 70 70"><path d="m6 11 46-10 10 58-47 10z" fill="#f3f3f3" stroke="#2b2b2b" stroke-width="3" stroke-dasharray="2 3"/><path d="m12 15 37-8 8 46-38 9z" fill="#3f87d5"/><path d="m16 46 39-9 3 16-39 9z" fill="#a9cdee"/><path d="M19 18c8 0 12 8 16 12 2-6 6-9 10-10-1 8-3 14-6 18l3 14-6 3c-2-5-5-9-8-12-5-6-8-14-9-25z" fill="#6d4a2e"/><circle cx="27" cy="22" r="4" fill="#f6f6f6"/></svg></button>
  <button aria-label="Sketch"><svg viewBox="0 0 70 70"><path d="M18 8 35 4l17 4 18 20-35 42L0 28z" fill="#f6a832"/><path d="M18 28h34L35 70z" fill="#fbb540"/><path d="M35 4 18 28h34z" fill="#ffe9a0"/><path d="M18 8 0 28h18zM52 8l18 20H52z" fill="#f9c95a"/></svg></button>
  <button aria-label="Figma"><svg viewBox="0 0 70 70"><rect x="3" y="7" width="62" height="60" rx="12" fill="#2e2f3a"/><path d="M34 15h-8a8 8 0 0 0 0 16h8z" fill="#ee5a33"/><path d="M34 15h8a8 8 0 0 1 0 16h-8z" fill="#f47c66"/><path d="M34 31h-8a8 8 0 0 0 0 16h8z" fill="#9a5af5"/><circle cx="42" cy="39" r="8" fill="#3fb4f3"/><path d="M34 47h-8a8 8 0 1 0 8 8z" fill="#4ecb84"/></svg></button>
  <button aria-label="Photoshop"><svg viewBox="0 0 70 70"><path d="M2 2h66v66H2z" fill="#0b2430" stroke="#55c8f5" stroke-width="3"/><text x="35" y="48" text-anchor="middle" font-size="35" font-weight="600" font-family="Open Sans" fill="#55c8f5">Ps</text></svg></button>
  <button aria-label="Illustrator"><svg viewBox="0 0 70 70"><path d="M2 2h66v66H2z" fill="#2c1703" stroke="#f0932e" stroke-width="3"/><text x="35" y="48" text-anchor="middle" font-size="35" font-weight="600" font-family="Open Sans" fill="#f0932e">Ai</text></svg></button>
  <button aria-label="InDesign"><svg viewBox="0 0 70 70"><path d="M2 2h66v66H2z" fill="#2d0813" stroke="#ed6ba0" stroke-width="3"/><text x="35" y="48" text-anchor="middle" font-size="35" font-weight="600" font-family="Open Sans" fill="#ed5a92">Id</text></svg></button>
  <button aria-label="XD"><svg viewBox="0 0 70 70"><rect x="2" y="2" width="66" height="66" rx="10" fill="#28041c" stroke="#f143bd" stroke-width="3"/><text x="35" y="48" text-anchor="middle" font-size="35" font-weight="600" font-family="Open Sans" fill="#fbd5f0">Xd</text></svg></button>
  <button aria-label="Maps"><svg viewBox="0 0 70 70"><path d="m2 14 52-8 8 50-50 10z" fill="#eef0ea"/><path d="m28 10 26-4 5 34-20 4z" fill="#8fcf7a"/><path d="m8 13 12-2 16 52-10 2z" fill="#f5c95a"/><path d="m20 40 36-22" stroke="#76b7e8" stroke-width="6"/><circle cx="20" cy="46" r="10" fill="#3478d8"/><path d="m20 38 5 14-5-3-5 3z" fill="#fff"/><circle cx="52" cy="53" r="15" fill="#fafafa" stroke="#ccc"/><path d="m52 37 3 6h-6z" fill="#e0392f"/><text x="52" y="59" text-anchor="middle" font-size="14" fill="#333">3D</text></svg></button>
  <button aria-label="Calendar"><svg viewBox="0 0 70 70"><path d="m10 12 46-8 8 50-50 12z" fill="#888"/><path d="m5 13 48-9 8 48-48 14z" fill="#fafafa"/><path d="m5 13 48-9 2 14-48 10z" fill="#d9433c"/><text x="30" y="22" text-anchor="middle" font-size="13" fill="#fff" transform="rotate(-10 30 22)">APR</text><text x="33" y="54" text-anchor="middle" font-size="30" fill="#222" transform="rotate(-10 33 54)">20</text></svg><i></i></button>
  <button aria-label="Photos"><svg viewBox="0 0 70 70"><circle cx="35" cy="37" r="33" fill="#f4f4f4"/><g opacity=".9"><ellipse cx="35" cy="21" rx="8" ry="12" fill="#f69a2c"/><ellipse cx="35" cy="21" rx="8" ry="12" fill="#d8cc36" transform="rotate(45 35 37)"/><ellipse cx="35" cy="21" rx="8" ry="12" fill="#8cc152" transform="rotate(90 35 37)"/><ellipse cx="35" cy="21" rx="8" ry="12" fill="#5cae9a" transform="rotate(135 35 37)"/><ellipse cx="35" cy="21" rx="8" ry="12" fill="#6aa3d8" transform="rotate(180 35 37)"/><ellipse cx="35" cy="21" rx="8" ry="12" fill="#9a7bc0" transform="rotate(225 35 37)"/><ellipse cx="35" cy="21" rx="8" ry="12" fill="#c9648e" transform="rotate(270 35 37)"/><ellipse cx="35" cy="21" rx="8" ry="12" fill="#ef5b3f" transform="rotate(315 35 37)"/></g></svg></button>
  <button aria-label="Messages"><svg viewBox="0 0 70 70"><path d="M34 6c-18 0-31 12-31 26 0 10 5 18 14 23-1 5-2 8-5 11 7-1 11-4 13-8 22 4 41-8 41-26C66 18 52 6 34 6z" fill="#4d9cf0"/><path d="M45 34c-11 0-19 8-19 18s7 15 17 16q5 0 8-1 3 3 8 2-3-2-3-5c5-3 8-7 8-12 0-10-8-18-19-18z" fill="#fff"/><circle cx="36" cy="52" r="3" fill="#345a9e"/><circle cx="45" cy="52" r="3" fill="#345a9e"/><circle cx="54" cy="52" r="3" fill="#345a9e"/></svg></button>
  <button aria-label="FaceTime"><svg viewBox="0 0 70 70"><rect x="3" y="8" width="60" height="54" rx="9" fill="#52cc4c"/><rect x="13" y="22" width="28" height="26" rx="6" fill="#fff"/><path d="m43 32 12-9v20z" fill="#fff"/><circle cx="52" cy="50" r="16" fill="#f4fbf3"/><path d="M45 43c0 9 6 15 14 15l2-4-5-4-3 2-3-5 2-3-4-4z" fill="#4cc247"/></svg></button>
  <button aria-label="Pages"><svg viewBox="0 0 70 70"><path d="m4 12 50-9 8 56-48 10z" fill="#f6f6f6"/><path d="m4 12 50-9 1 10-50 9z" fill="#f28b2c"/><path d="m14 28 18-3 2 16-18 3z" fill="#3f87e5"/><path d="M38 25l14-3M39 31l14-3M40 37l14-3M16 50l30-6M17 56l30-6" stroke="#999" stroke-width="2"/><path d="M60 2 46 62l-3 6" stroke="#e0992c" stroke-width="5"/></svg></button>
  <button aria-label="Keynote"><svg viewBox="0 0 70 70"><path d="M8 4h52l4 26H5z" fill="#3f95e0"/><path d="M17 8h36l2 18H15z" fill="#f6f6f6"/><circle cx="26" cy="18" r="6" fill="#e0457c"/><path d="M38 13h12M38 18h12M38 23h12" stroke="#999" stroke-width="2"/><path d="M34 31h3v32h-3z" fill="#9fb2c8"/><ellipse cx="35" cy="63" rx="15" ry="6" fill="#c5d8ec"/></svg></button>
  <button aria-label="News"><svg viewBox="0 0 70 70"><circle cx="35" cy="37" r="31" fill="#f9f9f9" stroke="#f0465a" stroke-width="3"/><path d="M17 20h12l24 24v12H41L17 30zM17 40l16 16H17zM53 34 38 20h15z" fill="#f0465a"/></svg></button>
  <button aria-label="iTunes"><svg viewBox="0 0 70 70"><defs><linearGradient id="tune" x1="0" y1="0" x2="1" y2="1"><stop offset="0" stop-color="#f4507f"/><stop offset=".5" stop-color="#b75cf0"/><stop offset="1" stop-color="#39b3f3"/></linearGradient></defs><circle cx="35" cy="37" r="31" fill="#fafafa" stroke="url(#tune)" stroke-width="4"/><path d="m29 22 22-5v30a6 6 0 1 1-4-6V27l-14 3v22a6 6 0 1 1-4-6z" fill="url(#tune)"/></svg></button>
  <button aria-label="System Preferences"><svg viewBox="0 0 70 70"><rect x="3" y="8" width="64" height="60" rx="4" fill="#b4bcc2"/><circle cx="35" cy="38" r="25" fill="#2b2b2b" stroke="#222" stroke-width="2"/><circle cx="35" cy="38" r="21" fill="#3a3a3a" stroke="#c4c4c4" stroke-width="4" stroke-dasharray="3 2"/><circle cx="35" cy="38" r="17" fill="none" stroke="#c4c4c4" stroke-width="4"/><path d="M35 38V22M35 38l14 8M35 38l-14 8" stroke="#c8c8c8" stroke-width="4"/><circle cx="35" cy="38" r="5" fill="#ccc"/></svg></button>
  <button aria-label="Acrobat"><svg viewBox="0 0 70 70"><path d="M2 2h66v66H2z" fill="#2d0a04" stroke="#f0401f" stroke-width="4"/><path d="M17 56c14-8 19-24 17-39-1-4-4-1-3 3 3 14 12 24 23 24 4-1 2-5-3-5-12-1-22 2-31 9-7 5-6 10-3 8z" fill="none" stroke="#f3f3f3" stroke-width="2.500"/></svg><i></i></button>
  <button aria-label="App Store"><svg viewBox="0 0 70 70"><circle cx="35" cy="37" r="31" fill="#2f86f4" stroke="#d6dde6" stroke-width="3"/><path d="m39 17-17 32M31 17l19 33M15 43h26M47 43h8M19 53l2-4" stroke="#fff" stroke-width="5" stroke-linecap="round"/></svg></button>
  <button aria-label="Excel"><svg viewBox="0 0 70 70"><path d="M35 12h32v50H35z" fill="#fff"/><path d="M40 18h10v6H40zM53 18h10v6H53z" fill="#222"/><path d="M40 27h10v6H40zM53 27h10v6H53zM40 36h10v6H40zM53 36h10v6H53zM40 45h10v6H40zM53 45h10v6H53zM40 54h10v4H40zM53 54h10v4H53z" fill="#3a9a62"/><path d="m1 12 38-8v66L1 60z" fill="#237b49"/><text x="19" y="46" text-anchor="middle" font-size="27" font-weight="600" fill="#fff">X</text></svg><i></i></button>
  <button aria-label="Calculator"><svg viewBox="0 0 70 70"><path d="m6 14 46-10 9 56-44 9z" fill="#c9c9c9"/><path d="m6 14 46-10 2 13-46 10z" fill="#222a2e"/><path d="m44 19 11-2 7 43-12 2z" fill="#f0923c"/><path d="m20 24 7 44M32 22l7 42M9 36l47-9M11 46l47-9M13 56l47-9" stroke="#888" stroke-width="1.500"/><text x="19" y="21" font-size="9" fill="#cde" transform="rotate(-10 19 21)">3.1415</text></svg><i></i></button>
  <button aria-label="Notes"><svg viewBox="0 0 70 70"><path d="m5 13 48-10 9 58-46 8z" fill="#fbfbf6"/><path d="m5 13 48-10 2 13-48 10z" fill="#fbcb36"/><path d="m9 33 47-9M10 40l47-9M12 47l47-9M13 54l46-8" stroke="#cfcfcf" stroke-width="1.500"/></svg><i></i></button>
  <button aria-label="Slack"><svg viewBox="0 0 70 70"><rect x="2" y="6" width="64" height="62" rx="10" fill="#4a154b"/><g stroke-width="8" stroke-linecap="round"><path d="M28 20v10M17 32h9" stroke="#4cc3ea"/><path d="M51 33h-4M39 20v12" stroke="#3fb87f"/><path d="M39 57v-3M50 44H39" stroke="#e5b03b"/><path d="M16 44h1M28 56V44" stroke="#dc2c5c"/></g><circle cx="55" cy="14" r="14" fill="#e04a3a"/><circle cx="55" cy="14" r="2" fill="#fff"/></svg><i></i></button>
  <button aria-label="Wunderlist"><svg viewBox="0 0 70 70"><rect x="2" y="5" width="66" height="63" rx="11" fill="#d88a4c"/><rect x="8" y="9" width="54" height="55" rx="5" fill="#fff"/><path d="M14 9h42v54L35 48 14 63z" fill="#dd4a35"/><path d="m35 21 4 10h11l-9 6 4 11-10-7-10 7 4-11-9-6h11z" fill="#fff"/></svg><i></i></button>
  <button aria-label="Evernote"><svg viewBox="0 0 70 70"><circle cx="35" cy="37" r="33" fill="#fbfbfb"/><path d="M15 27h10V17z" fill="#4fa832"/><path d="M15 30h13V17q6-2 10 2 13-1 15 6 3 12 0 26-1 9-11 9-8 0-7-8c1-5 8-4 8-8l-4-1c-3 4-4 4-10 4-10 0-13-8-14-17z" fill="#4fa832"/><circle cx="46" cy="35" r="2" fill="#fff"/></svg></button>
  <button aria-label="Principle"><svg viewBox="0 0 70 70"><circle cx="35" cy="37" r="34" fill="#fbfbfb"/><path d="M23 60V32c0-10 7-16 15-16a14 14 0 0 1 0 28c-3 0-5-2-7-3v14q0 5-8 5z" fill="#7a4ac0"/><circle cx="37" cy="30" r="5" fill="#fff"/></svg></button>
  <button aria-label="Artboard"><svg viewBox="0 0 70 70"><path d="M0 0h70v70H0z" fill="#3a78bb"/><path d="m14 58 18-46h14l8 46H42l-1-12H29l-4 12z" fill="#fff"/><path d="m33 36 5-14 2 14z" fill="#3a78bb"/><path d="M6 66 66 6" stroke="#fff" stroke-width="3"/></svg></button>
  <span class="mx-auto mt-[16px] h-[46px] w-[2px] bg-[#666]"></span>
  <button aria-label="Atom"><svg viewBox="0 0 70 70"><circle cx="35" cy="37" r="31" fill="#6cbc8a" stroke="#eee" stroke-width="3"/><g fill="none" stroke="#e9f7ee" stroke-width="2"><ellipse cx="35" cy="37" rx="8" ry="22"/><ellipse cx="35" cy="37" rx="8" ry="22" transform="rotate(60 35 37)"/><ellipse cx="35" cy="37" rx="8" ry="22" transform="rotate(120 35 37)"/></g><circle cx="35" cy="37" r="3" fill="#fff"/></svg><i></i></button>
  <button aria-label="GitHub Desktop"><svg viewBox="0 0 70 70"><circle cx="35" cy="36" r="33" fill="#6a3fa0" stroke="#eee" stroke-width="2"/><path d="M17 17l9 4q9-2 18 0l9-4q3 7 0 11c6 12-2 21-11 22 3 3 3 8 3 18H27v-8c-9 2-10-5-14-7 6-1 6 4 14 3q0-4 2-6c-9-1-17-10-11-22q-4-4-1-11z" fill="#fff"/></svg><i></i></button>
  <button aria-label="Rhinoceros"><svg viewBox="0 0 70 70"><path d="m6 12 54-11 8 58-52 11z" fill="#3f3f42"/><path d="M3 8c3 10 8 16 15 20C14 20 16 12 20 8c2 12 8 20 18 26 8-2 16-2 22-10 2 10 0 16-6 20 6 6 6 16 0 22-6-4-8-12-16-16C24 48 2 34 3 8z" fill="#f3f3f3"/><path d="m22 40 12 2 2 8-6-2z" fill="#d3362b"/><path d="M44 50q8 2 8 10" fill="none" stroke="#333" stroke-width="3"/></svg><i></i></button>
  <button aria-label="QuickTime"><svg viewBox="0 0 70 70"><circle cx="35" cy="36" r="33" fill="#5c6470"/><circle cx="35" cy="36" r="26" fill="#262b33"/><path d="M35 14a22 22 0 1 0 8 42l-8-8a12 12 0 1 1 11-14l10 8a22 22 0 0 0-21-28z" fill="#2f95f0"/><path d="m38 40 8-2 20 28H50z" fill="#3e444e"/></svg><i></i></button>
  <span class="mx-auto mt-[4px] h-[70px] w-[2px] bg-[#555]"></span>
  <button aria-label="Minimized window"><svg viewBox="0 0 70 70"><path d="M9 6h52v12H9z" fill="#1a1a1a"/><path d="M6 12h56v46H6z" fill="#f3f3f3"/><circle cx="18" cy="20" r="2" fill="#8ac63f"/><circle cx="30" cy="20" r="2" fill="#3f9fd8"/><path d="M4 25h62v33H4z" fill="#fff" stroke="#ddd"/><path d="M4 25h62v6H4z" fill="#dfe4ee"/><path d="M14 38h24M24 46h26M24 51h18" stroke="#b5b5b5" stroke-width="2"/></svg></button>
  <button aria-label="Trash"><svg viewBox="0 0 70 70"><path d="m11 10 48 0-7 56q-17 7-34 0z" fill="#5a5a5c"/><path d="m17 16 6 48M53 16l-6 48" stroke="#8a8a8c" stroke-width="3"/><ellipse cx="35" cy="12" rx="24" ry="6" fill="#333" stroke="#999" stroke-width="2"/><path d="m16 12 6-9 7 6 5-8 8 7 7-5 6 9q-20 8-39 0z" fill="#e9e9e9"/><path d="m26 10 5 0 2 5zM42 9l6 1-4 4z" fill="#b5572e"/></svg></button>
</nav>
</body>
</html>
